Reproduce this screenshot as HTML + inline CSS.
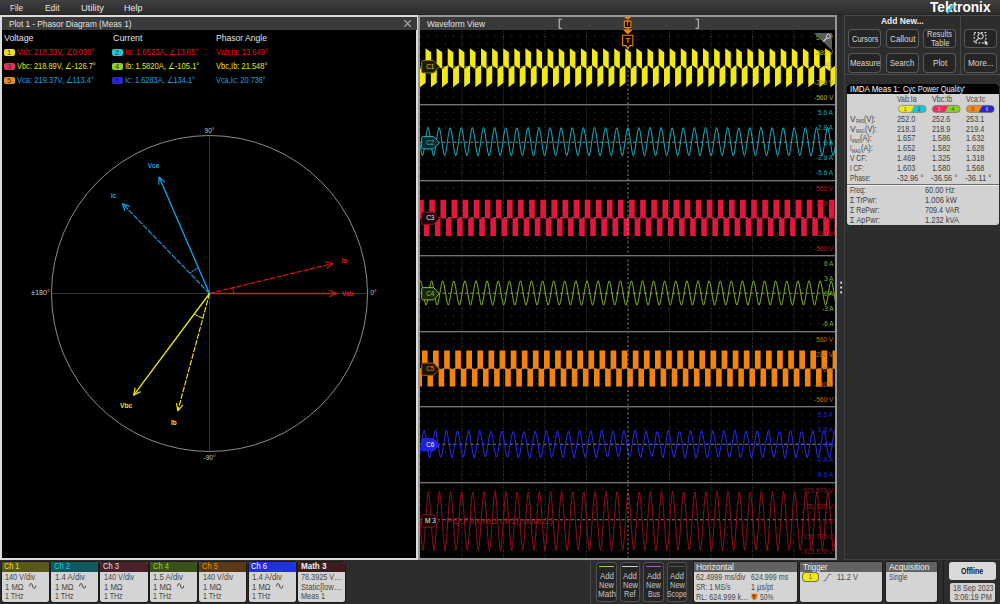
<!DOCTYPE html>
<html lang="en">
<head>
<meta charset="utf-8">
<title>Plot 1 - Phasor Diagram (Meas 1)</title>
<style>
html,body{margin:0;padding:0;}
body{width:1000px;height:604px;overflow:hidden;background:#2c2c2c repeating-conic-gradient(#292929 0% 25%,#303030 0% 50%) 0 0/2px 2px;position:relative;
font-family:"Liberation Sans",sans-serif;}
.abs,.t{position:absolute;}
.t{white-space:nowrap;line-height:1;transform-origin:0 50%;}
svg{position:absolute;overflow:visible;}
.panel{position:absolute;box-sizing:border-box;background:#000;}
.btn{position:absolute;box-sizing:border-box;border:1px solid #585858;border-radius:4px;background:#252525;box-shadow:0 0 1px #4a4a4a;}
.badge{position:absolute;box-sizing:border-box;background:#d6d6d6;border-radius:2px;}
</style>
</head>
<body>
<div class="abs" id="menubar" style="left:0;top:0;width:1000px;height:15px;background:linear-gradient(#404040 0,#373737 35%,#2d2d2d 90%,#202020 100%);"><span class="t" style="left:10.00px;top:3.06px;font-size:9.50px;color:#e6e6e6;transform:scaleX(0.8490);">File</span><span class="t" style="left:44.50px;top:3.06px;font-size:9.50px;color:#e6e6e6;transform:scaleX(0.8855);">Edit</span><span class="t" style="left:80.50px;top:3.06px;font-size:9.50px;color:#e6e6e6;transform:scaleX(0.9899);">Utility</span><span class="t" style="left:124.00px;top:3.06px;font-size:9.50px;color:#e6e6e6;transform:scaleX(0.9464);">Help</span></div>
<div class="panel" id="phasor" style="left:0;top:15px;width:418px;height:545px;border:2px solid #dcdcdc;"><div class="abs" style="left:0;top:0;width:415px;height:13px;background:#3a3a3a;"></div></div>
<span class="t" style="left:8.50px;top:19.06px;font-size:9.50px;color:#e0e0e0;transform:scaleX(0.8657);">Plot 1 - Phasor Diagram (Meas 1)</span><svg style="left:403px;top:19px" width="9" height="9" viewBox="0 0 9 9"><path d="M1.4 1.2 L7.8 7.8 M7.8 1.2 L1.4 7.8" stroke="#b8b8b8" stroke-width="1.05" fill="none"/></svg><span class="t" style="left:4.00px;top:32.76px;font-size:9.50px;color:#e0e0e0;transform:scaleX(0.9305);">Voltage</span><span class="t" style="left:112.60px;top:32.76px;font-size:9.50px;color:#e0e0e0;transform:scaleX(0.9310);">Current</span><span class="t" style="left:216.40px;top:32.76px;font-size:9.50px;color:#e0e0e0;transform:scaleX(0.9024);">Phasor Angle</span><div class="abs" style="left:4.0px;top:48.8px;width:10.5px;height:7.5px;border-radius:2px;background:#e8e020;"></div><span class="t" style="left:7.11px;top:49.15px;font-size:7.50px;color:#333;">1</span><span class="t" style="left:17.00px;top:48.18px;font-size:9.00px;color:#e5121c;transform:scaleX(0.8385);">Vab: 218.33V, ∠0.000°</span><div class="abs" style="left:112.0px;top:48.8px;width:10.5px;height:7.5px;border-radius:2px;background:#25c6d4;"></div><span class="t" style="left:115.11px;top:49.15px;font-size:7.50px;color:#333;">2</span><span class="t" style="left:125.30px;top:48.18px;font-size:9.00px;color:#e5121c;transform:scaleX(0.8641);">Ia: 1.6523A, ∠13.65°</span><span class="t" style="left:216.20px;top:48.18px;font-size:9.00px;color:#e5121c;transform:scaleX(0.8457);">Vab,Ia: 13.649°</span><div class="abs" style="left:4.0px;top:62.8px;width:10.5px;height:7.5px;border-radius:2px;background:#e0305a;"></div><span class="t" style="left:7.11px;top:63.15px;font-size:7.50px;color:#333;">3</span><span class="t" style="left:17.00px;top:62.18px;font-size:9.00px;color:#ece413;transform:scaleX(0.8265);">Vbc: 218.89V, ∠-126.7°</span><div class="abs" style="left:112.0px;top:62.8px;width:10.5px;height:7.5px;border-radius:2px;background:#8fd02a;"></div><span class="t" style="left:115.11px;top:63.15px;font-size:7.50px;color:#333;">4</span><span class="t" style="left:125.30px;top:62.18px;font-size:9.00px;color:#ece413;transform:scaleX(0.8440);">Ib: 1.5820A, ∠-105.1°</span><span class="t" style="left:216.20px;top:62.18px;font-size:9.00px;color:#ece413;transform:scaleX(0.8353);">Vbc,Ib: 21.548°</span><div class="abs" style="left:4.0px;top:76.8px;width:10.5px;height:7.5px;border-radius:2px;background:#f08a1c;"></div><span class="t" style="left:7.11px;top:77.15px;font-size:7.50px;color:#333;">5</span><span class="t" style="left:17.00px;top:76.18px;font-size:9.00px;color:#14a0e4;transform:scaleX(0.8400);">Vca: 219.37V, ∠113.4°</span><div class="abs" style="left:112.0px;top:76.8px;width:10.5px;height:7.5px;border-radius:2px;background:#2828d8;"></div><span class="t" style="left:115.11px;top:77.15px;font-size:7.50px;color:#1a1a90;">6</span><span class="t" style="left:125.30px;top:76.18px;font-size:9.00px;color:#14a0e4;transform:scaleX(0.8269);">Ic: 1.6283A, ∠134.1°</span><span class="t" style="left:216.20px;top:76.18px;font-size:9.00px;color:#14a0e4;transform:scaleX(0.8145);">Vca,Ic: 20.736°</span>
<svg id="phasorplot" style="left:0;top:0" width="419" height="561" viewBox="0 0 419 561"><line x1="51.5" y1="293.5" x2="367.5" y2="293.5" stroke="#353535" stroke-width="1"/><line x1="209.5" y1="135.5" x2="209.5" y2="451.5" stroke="#353535" stroke-width="1"/><circle cx="209.5" cy="293.5" r="158.0" fill="none" stroke="#9a9a9a" stroke-width="0.9"/><line x1="209.50" y1="293.50" x2="336.50" y2="293.50" stroke="#e5121c" stroke-width="1.35"/><line x1="336.50" y1="293.50" x2="329.43" y2="290.20" stroke="#e5121c" stroke-width="1.2"/><line x1="336.50" y1="293.50" x2="329.43" y2="296.80" stroke="#e5121c" stroke-width="1.2"/><line x1="209.50" y1="293.50" x2="332.91" y2="263.53" stroke="#e5121c" stroke-width="1.15" stroke-dasharray="5.6 1.3"/><line x1="332.91" y1="263.53" x2="325.27" y2="261.99" stroke="#e5121c" stroke-width="1.2"/><line x1="332.91" y1="263.53" x2="326.82" y2="268.40" stroke="#e5121c" stroke-width="1.2"/><path d="M233.50 293.50 A24.0 24.0 0 0 0 232.82 287.84" fill="none" stroke="#e5121c" stroke-width="1"/><line x1="209.50" y1="293.50" x2="159.06" y2="176.95" stroke="#14a0e4" stroke-width="1.35"/><line x1="159.06" y1="176.95" x2="158.84" y2="184.74" stroke="#14a0e4" stroke-width="1.2"/><line x1="159.06" y1="176.95" x2="164.90" y2="182.12" stroke="#14a0e4" stroke-width="1.2"/><line x1="209.50" y1="293.50" x2="122.37" y2="203.59" stroke="#14a0e4" stroke-width="1.15" stroke-dasharray="5.6 1.3"/><line x1="122.37" y1="203.59" x2="124.92" y2="210.96" stroke="#14a0e4" stroke-width="1.2"/><line x1="122.37" y1="203.59" x2="129.66" y2="206.37" stroke="#14a0e4" stroke-width="1.2"/><path d="M198.38 267.80 A28.0 28.0 0 0 0 190.01 273.39" fill="none" stroke="#14a0e4" stroke-width="1"/><line x1="209.50" y1="293.50" x2="133.60" y2="395.33" stroke="#ece413" stroke-width="1.35"/><line x1="133.60" y1="395.33" x2="140.47" y2="391.63" stroke="#ece413" stroke-width="1.2"/><line x1="133.60" y1="395.33" x2="135.18" y2="387.69" stroke="#ece413" stroke-width="1.2"/><line x1="209.50" y1="293.50" x2="177.82" y2="410.90" stroke="#ece413" stroke-width="1.15" stroke-dasharray="5.6 1.3"/><line x1="177.82" y1="410.90" x2="182.85" y2="404.94" stroke="#ece413" stroke-width="1.2"/><line x1="177.82" y1="410.90" x2="176.48" y2="403.22" stroke="#ece413" stroke-width="1.2"/><path d="M194.26 313.95 A25.5 25.5 0 0 0 202.86 318.12" fill="none" stroke="#ece413" stroke-width="1"/></svg>
<span class="t" style="left:204.58px;top:128.00px;font-size:6.50px;color:#c8c8c8;">90°</span><span class="t" style="left:203.50px;top:455.00px;font-size:6.50px;color:#c8c8c8;">-90°</span><span class="t" style="left:370.50px;top:290.30px;font-size:6.50px;color:#c8c8c8;">0°</span><span class="t" style="left:30.50px;top:290.30px;font-size:6.50px;color:#c8c8c8;transform:scaleX(1.1166);">±180°</span><span class="t" style="left:342.20px;top:291.28px;font-size:6.40px;color:#e5121c;font-weight:bold;transform:scaleX(1.0198);">Vab</span><span class="t" style="left:341.80px;top:258.08px;font-size:6.40px;color:#e5121c;font-weight:bold;">Ia</span><span class="t" style="left:147.80px;top:163.38px;font-size:6.40px;color:#14a0e4;font-weight:bold;">Vca</span><span class="t" style="left:110.90px;top:193.48px;font-size:6.40px;color:#14a0e4;font-weight:bold;">Ic</span><span class="t" style="left:119.50px;top:403.08px;font-size:6.40px;color:#ece413;font-weight:bold;transform:scaleX(1.0397);">Vbc</span><span class="t" style="left:171.00px;top:420.08px;font-size:6.40px;color:#ece413;font-weight:bold;">Ib</span>
<div class="panel" id="waveview" style="left:418px;top:15px;width:419px;height:545px;border:2px solid #969696;"><div class="abs" style="left:0;top:0;width:415px;height:13px;background:#393939;"></div></div>
<span class="t" style="left:426.50px;top:19.06px;font-size:9.50px;color:#e0e0e0;transform:scaleX(0.8788);">Waveform View</span><svg id="waves" style="left:0;top:0" width="1000" height="604" viewBox="0 0 1000 604"><defs><pattern id="dots" x="420.00" y="66.25" width="8.300" height="7.550" patternUnits="userSpaceOnUse"><rect x="0" y="0" width="1" height="1" fill="#3e3e3e"/></pattern><clipPath id="wclip"><rect x="420.0" y="30.0" width="415.0" height="528.5"/></clipPath></defs><g clip-path="url(#wclip)"><rect x="420.0" y="29.0" width="415.0" height="528.5" fill="url(#dots)"/><line x1="462.00" y1="29.0" x2="462.00" y2="557.5" stroke="#2c2c2c" stroke-width="1" stroke-dasharray="1 1"/><line x1="503.50" y1="29.0" x2="503.50" y2="557.5" stroke="#2c2c2c" stroke-width="1" stroke-dasharray="1 1"/><line x1="545.00" y1="29.0" x2="545.00" y2="557.5" stroke="#2c2c2c" stroke-width="1" stroke-dasharray="1 1"/><line x1="586.50" y1="29.0" x2="586.50" y2="557.5" stroke="#2c2c2c" stroke-width="1" stroke-dasharray="1 1"/><line x1="669.50" y1="29.0" x2="669.50" y2="557.5" stroke="#2c2c2c" stroke-width="1" stroke-dasharray="1 1"/><line x1="711.00" y1="29.0" x2="711.00" y2="557.5" stroke="#2c2c2c" stroke-width="1" stroke-dasharray="1 1"/><line x1="752.50" y1="29.0" x2="752.50" y2="557.5" stroke="#2c2c2c" stroke-width="1" stroke-dasharray="1 1"/><line x1="794.00" y1="29.0" x2="794.00" y2="557.5" stroke="#2c2c2c" stroke-width="1" stroke-dasharray="1 1"/><line x1="420.0" y1="66.75" x2="835.0" y2="66.75" stroke="#858585" stroke-width="1" stroke-dasharray="3 2.6"/><line x1="420.0" y1="142.25" x2="835.0" y2="142.25" stroke="#858585" stroke-width="1" stroke-dasharray="3 2.6"/><line x1="420.0" y1="217.75" x2="835.0" y2="217.75" stroke="#858585" stroke-width="1" stroke-dasharray="3 2.6"/><line x1="420.0" y1="293.25" x2="835.0" y2="293.25" stroke="#858585" stroke-width="1" stroke-dasharray="3 2.6"/><line x1="420.0" y1="368.75" x2="835.0" y2="368.75" stroke="#858585" stroke-width="1" stroke-dasharray="3 2.6"/><line x1="420.0" y1="444.25" x2="835.0" y2="444.25" stroke="#858585" stroke-width="1" stroke-dasharray="3 2.6"/><line x1="420.0" y1="519.75" x2="835.0" y2="519.75" stroke="#858585" stroke-width="1" stroke-dasharray="3 2.6"/><path d="M403.30 48.20 L408.90 52.20 L408.90 69.10 L403.30 64.90 ZM408.70 68.90 L414.55 65.10 L414.55 82.80 L408.70 87.30 ZM414.40 48.20 L420.00 52.20 L420.00 69.10 L414.40 64.90 ZM419.80 68.90 L425.65 65.10 L425.65 82.80 L419.80 87.30 ZM425.50 48.20 L431.10 52.20 L431.10 69.10 L425.50 64.90 ZM430.90 68.90 L436.75 65.10 L436.75 82.80 L430.90 87.30 ZM436.60 48.20 L442.20 52.20 L442.20 69.10 L436.60 64.90 ZM442.00 68.90 L447.85 65.10 L447.85 82.80 L442.00 87.30 ZM447.70 48.20 L453.30 52.20 L453.30 69.10 L447.70 64.90 ZM453.10 68.90 L458.95 65.10 L458.95 82.80 L453.10 87.30 ZM458.80 48.20 L464.40 52.20 L464.40 69.10 L458.80 64.90 ZM464.20 68.90 L470.05 65.10 L470.05 82.80 L464.20 87.30 ZM469.90 48.20 L475.50 52.20 L475.50 69.10 L469.90 64.90 ZM475.30 68.90 L481.15 65.10 L481.15 82.80 L475.30 87.30 ZM481.00 48.20 L486.60 52.20 L486.60 69.10 L481.00 64.90 ZM486.40 68.90 L492.25 65.10 L492.25 82.80 L486.40 87.30 ZM492.10 48.20 L497.70 52.20 L497.70 69.10 L492.10 64.90 ZM497.50 68.90 L503.35 65.10 L503.35 82.80 L497.50 87.30 ZM503.20 48.20 L508.80 52.20 L508.80 69.10 L503.20 64.90 ZM508.60 68.90 L514.45 65.10 L514.45 82.80 L508.60 87.30 ZM514.30 48.20 L519.90 52.20 L519.90 69.10 L514.30 64.90 ZM519.70 68.90 L525.55 65.10 L525.55 82.80 L519.70 87.30 ZM525.40 48.20 L531.00 52.20 L531.00 69.10 L525.40 64.90 ZM530.80 68.90 L536.65 65.10 L536.65 82.80 L530.80 87.30 ZM536.50 48.20 L542.10 52.20 L542.10 69.10 L536.50 64.90 ZM541.90 68.90 L547.75 65.10 L547.75 82.80 L541.90 87.30 ZM547.60 48.20 L553.20 52.20 L553.20 69.10 L547.60 64.90 ZM553.00 68.90 L558.85 65.10 L558.85 82.80 L553.00 87.30 ZM558.70 48.20 L564.30 52.20 L564.30 69.10 L558.70 64.90 ZM564.10 68.90 L569.95 65.10 L569.95 82.80 L564.10 87.30 ZM569.80 48.20 L575.40 52.20 L575.40 69.10 L569.80 64.90 ZM575.20 68.90 L581.05 65.10 L581.05 82.80 L575.20 87.30 ZM580.90 48.20 L586.50 52.20 L586.50 69.10 L580.90 64.90 ZM586.30 68.90 L592.15 65.10 L592.15 82.80 L586.30 87.30 ZM592.00 48.20 L597.60 52.20 L597.60 69.10 L592.00 64.90 ZM597.40 68.90 L603.25 65.10 L603.25 82.80 L597.40 87.30 ZM603.10 48.20 L608.70 52.20 L608.70 69.10 L603.10 64.90 ZM608.50 68.90 L614.35 65.10 L614.35 82.80 L608.50 87.30 ZM614.20 48.20 L619.80 52.20 L619.80 69.10 L614.20 64.90 ZM619.60 68.90 L625.45 65.10 L625.45 82.80 L619.60 87.30 ZM625.30 48.20 L630.90 52.20 L630.90 69.10 L625.30 64.90 ZM630.70 68.90 L636.55 65.10 L636.55 82.80 L630.70 87.30 ZM636.40 48.20 L642.00 52.20 L642.00 69.10 L636.40 64.90 ZM641.80 68.90 L647.65 65.10 L647.65 82.80 L641.80 87.30 ZM647.50 48.20 L653.10 52.20 L653.10 69.10 L647.50 64.90 ZM652.90 68.90 L658.75 65.10 L658.75 82.80 L652.90 87.30 ZM658.60 48.20 L664.20 52.20 L664.20 69.10 L658.60 64.90 ZM664.00 68.90 L669.85 65.10 L669.85 82.80 L664.00 87.30 ZM669.70 48.20 L675.30 52.20 L675.30 69.10 L669.70 64.90 ZM675.10 68.90 L680.95 65.10 L680.95 82.80 L675.10 87.30 ZM680.80 48.20 L686.40 52.20 L686.40 69.10 L680.80 64.90 ZM686.20 68.90 L692.05 65.10 L692.05 82.80 L686.20 87.30 ZM691.90 48.20 L697.50 52.20 L697.50 69.10 L691.90 64.90 ZM697.30 68.90 L703.15 65.10 L703.15 82.80 L697.30 87.30 ZM703.00 48.20 L708.60 52.20 L708.60 69.10 L703.00 64.90 ZM708.40 68.90 L714.25 65.10 L714.25 82.80 L708.40 87.30 ZM714.10 48.20 L719.70 52.20 L719.70 69.10 L714.10 64.90 ZM719.50 68.90 L725.35 65.10 L725.35 82.80 L719.50 87.30 ZM725.20 48.20 L730.80 52.20 L730.80 69.10 L725.20 64.90 ZM730.60 68.90 L736.45 65.10 L736.45 82.80 L730.60 87.30 ZM736.30 48.20 L741.90 52.20 L741.90 69.10 L736.30 64.90 ZM741.70 68.90 L747.55 65.10 L747.55 82.80 L741.70 87.30 ZM747.40 48.20 L753.00 52.20 L753.00 69.10 L747.40 64.90 ZM752.80 68.90 L758.65 65.10 L758.65 82.80 L752.80 87.30 ZM758.50 48.20 L764.10 52.20 L764.10 69.10 L758.50 64.90 ZM763.90 68.90 L769.75 65.10 L769.75 82.80 L763.90 87.30 ZM769.60 48.20 L775.20 52.20 L775.20 69.10 L769.60 64.90 ZM775.00 68.90 L780.85 65.10 L780.85 82.80 L775.00 87.30 ZM780.70 48.20 L786.30 52.20 L786.30 69.10 L780.70 64.90 ZM786.10 68.90 L791.95 65.10 L791.95 82.80 L786.10 87.30 ZM791.80 48.20 L797.40 52.20 L797.40 69.10 L791.80 64.90 ZM797.20 68.90 L803.05 65.10 L803.05 82.80 L797.20 87.30 ZM802.90 48.20 L808.50 52.20 L808.50 69.10 L802.90 64.90 ZM808.30 68.90 L814.15 65.10 L814.15 82.80 L808.30 87.30 ZM814.00 48.20 L819.60 52.20 L819.60 69.10 L814.00 64.90 ZM819.40 68.90 L825.25 65.10 L825.25 82.80 L819.40 87.30 ZM825.10 48.20 L830.70 52.20 L830.70 69.10 L825.10 64.90 ZM830.50 68.90 L836.35 65.10 L836.35 82.80 L830.50 87.30 ZM836.20 48.20 L841.80 52.20 L841.80 69.10 L836.20 64.90 ZM841.60 68.90 L847.45 65.10 L847.45 82.80 L841.60 87.30 Z" fill="#f2ea10"/><polyline points="419.0,136.9 419.5,140.4 420.0,144.1 420.5,147.5 421.0,150.6 421.5,153.2 422.0,155.0 422.5,155.9 423.0,154.7 423.5,152.7 424.0,150.0 424.5,146.9 425.0,143.3 425.5,139.7 426.0,136.2 426.5,133.1 427.0,130.4 427.5,128.5 428.0,127.4 428.5,128.5 429.0,130.4 429.5,133.1 430.0,136.2 430.5,139.7 431.0,143.3 431.5,146.9 432.0,150.0 432.5,152.7 433.0,154.7 433.5,155.9 434.0,155.0 434.5,153.2 435.0,150.6 435.5,147.5 436.0,144.1 436.5,140.4 437.0,136.9 437.5,133.7 438.0,130.9 438.5,128.9 439.0,127.6 439.5,128.2 440.0,130.0 440.5,132.5 441.0,135.5 441.5,139.0 442.0,142.6 442.5,146.2 443.0,149.4 443.5,152.2 444.0,154.4 444.5,155.7 445.0,155.3 445.5,153.6 446.0,151.2 446.5,148.2 447.0,144.8 447.5,141.2 448.0,137.6 448.5,134.3 449.0,131.4 449.5,129.2 450.0,127.8 450.5,128.0 451.0,129.6 451.5,131.9 452.0,134.9 452.5,138.3 453.0,141.9 453.5,145.5 454.0,148.8 454.5,151.7 455.0,154.0 455.5,155.5 456.0,155.5 456.5,154.0 457.0,151.7 457.5,148.8 458.0,145.5 458.5,141.9 459.0,138.3 459.5,134.9 460.0,131.9 460.5,129.6 461.0,128.0 461.5,127.8 462.0,129.2 462.5,131.4 463.0,134.3 463.5,137.6 464.0,141.2 464.5,144.8 465.0,148.2 465.5,151.2 466.0,153.6 466.5,155.3 467.0,155.7 467.5,154.4 468.0,152.2 468.5,149.4 469.0,146.2 469.5,142.6 470.0,139.0 470.5,135.5 471.0,132.5 471.5,130.0 472.0,128.2 472.5,127.6 473.0,128.9 473.5,130.9 474.0,133.7 474.5,136.9 475.0,140.4 475.5,144.1 476.0,147.5 476.5,150.6 477.0,153.2 477.5,155.0 478.0,155.9 478.5,154.7 479.0,152.7 479.5,150.0 480.0,146.9 480.5,143.3 481.0,139.7 481.5,136.2 482.0,133.1 482.5,130.4 483.0,128.5 483.5,127.4 484.0,128.5 484.5,130.4 485.0,133.1 485.5,136.2 486.0,139.7 486.5,143.3 487.0,146.9 487.5,150.0 488.0,152.7 488.5,154.7 489.0,155.9 489.5,155.0 490.0,153.2 490.5,150.6 491.0,147.5 491.5,144.1 492.0,140.4 492.5,136.9 493.0,133.7 493.5,130.9 494.0,128.9 494.5,127.6 495.0,128.2 495.5,130.0 496.0,132.5 496.5,135.5 497.0,139.0 497.5,142.6 498.0,146.2 498.5,149.4 499.0,152.2 499.5,154.4 500.0,155.7 500.5,155.3 501.0,153.6 501.5,151.2 502.0,148.2 502.5,144.8 503.0,141.2 503.5,137.6 504.0,134.3 504.5,131.4 505.0,129.2 505.5,127.8 506.0,128.0 506.5,129.6 507.0,131.9 507.5,134.9 508.0,138.3 508.5,141.9 509.0,145.5 509.5,148.8 510.0,151.7 510.5,154.0 511.0,155.5 511.5,155.5 512.0,154.0 512.5,151.7 513.0,148.8 513.5,145.5 514.0,141.9 514.5,138.3 515.0,134.9 515.5,131.9 516.0,129.6 516.5,128.0 517.0,127.8 517.5,129.2 518.0,131.4 518.5,134.3 519.0,137.6 519.5,141.2 520.0,144.8 520.5,148.2 521.0,151.2 521.5,153.6 522.0,155.3 522.5,155.7 523.0,154.4 523.5,152.2 524.0,149.4 524.5,146.2 525.0,142.6 525.5,139.0 526.0,135.5 526.5,132.5 527.0,130.0 527.5,128.2 528.0,127.6 528.5,128.9 529.0,130.9 529.5,133.7 530.0,136.9 530.5,140.4 531.0,144.1 531.5,147.5 532.0,150.6 532.5,153.2 533.0,155.0 533.5,155.9 534.0,154.7 534.5,152.7 535.0,150.0 535.5,146.9 536.0,143.3 536.5,139.7 537.0,136.2 537.5,133.1 538.0,130.4 538.5,128.5 539.0,127.4 539.5,128.5 540.0,130.4 540.5,133.1 541.0,136.2 541.5,139.7 542.0,143.3 542.5,146.9 543.0,150.0 543.5,152.7 544.0,154.7 544.5,155.9 545.0,155.0 545.5,153.2 546.0,150.6 546.5,147.5 547.0,144.1 547.5,140.4 548.0,136.9 548.5,133.7 549.0,130.9 549.5,128.9 550.0,127.6 550.5,128.2 551.0,130.0 551.5,132.5 552.0,135.5 552.5,139.0 553.0,142.6 553.5,146.2 554.0,149.4 554.5,152.2 555.0,154.4 555.5,155.7 556.0,155.3 556.5,153.6 557.0,151.2 557.5,148.2 558.0,144.8 558.5,141.2 559.0,137.6 559.5,134.3 560.0,131.4 560.5,129.2 561.0,127.8 561.5,128.0 562.0,129.6 562.5,131.9 563.0,134.9 563.5,138.3 564.0,141.9 564.5,145.5 565.0,148.8 565.5,151.7 566.0,154.0 566.5,155.5 567.0,155.5 567.5,154.0 568.0,151.7 568.5,148.8 569.0,145.5 569.5,141.9 570.0,138.3 570.5,134.9 571.0,131.9 571.5,129.6 572.0,128.0 572.5,127.8 573.0,129.2 573.5,131.4 574.0,134.3 574.5,137.6 575.0,141.2 575.5,144.8 576.0,148.2 576.5,151.2 577.0,153.6 577.5,155.3 578.0,155.7 578.5,154.4 579.0,152.2 579.5,149.4 580.0,146.2 580.5,142.6 581.0,139.0 581.5,135.5 582.0,132.5 582.5,130.0 583.0,128.2 583.5,127.6 584.0,128.9 584.5,130.9 585.0,133.7 585.5,136.9 586.0,140.4 586.5,144.1 587.0,147.5 587.5,150.6 588.0,153.2 588.5,155.0 589.0,155.9 589.5,154.7 590.0,152.7 590.5,150.0 591.0,146.9 591.5,143.3 592.0,139.7 592.5,136.2 593.0,133.1 593.5,130.4 594.0,128.5 594.5,127.4 595.0,128.5 595.5,130.4 596.0,133.1 596.5,136.2 597.0,139.7 597.5,143.3 598.0,146.9 598.5,150.0 599.0,152.7 599.5,154.7 600.0,155.9 600.5,155.0 601.0,153.2 601.5,150.6 602.0,147.5 602.5,144.1 603.0,140.4 603.5,136.9 604.0,133.7 604.5,130.9 605.0,128.9 605.5,127.6 606.0,128.2 606.5,130.0 607.0,132.5 607.5,135.5 608.0,139.0 608.5,142.6 609.0,146.2 609.5,149.4 610.0,152.2 610.5,154.4 611.0,155.7 611.5,155.3 612.0,153.6 612.5,151.2 613.0,148.2 613.5,144.8 614.0,141.2 614.5,137.6 615.0,134.3 615.5,131.4 616.0,129.2 616.5,127.8 617.0,128.0 617.5,129.6 618.0,131.9 618.5,134.9 619.0,138.3 619.5,141.9 620.0,145.5 620.5,148.8 621.0,151.7 621.5,154.0 622.0,155.5 622.5,155.5 623.0,154.0 623.5,151.7 624.0,148.8 624.5,145.5 625.0,141.9 625.5,138.3 626.0,134.9 626.5,131.9 627.0,129.6 627.5,128.0 628.0,127.8 628.5,129.2 629.0,131.4 629.5,134.3 630.0,137.6 630.5,141.2 631.0,144.8 631.5,148.2 632.0,151.2 632.5,153.6 633.0,155.3 633.5,155.7 634.0,154.4 634.5,152.2 635.0,149.4 635.5,146.2 636.0,142.6 636.5,139.0 637.0,135.5 637.5,132.5 638.0,130.0 638.5,128.2 639.0,127.6 639.5,128.9 640.0,130.9 640.5,133.7 641.0,136.9 641.5,140.4 642.0,144.1 642.5,147.5 643.0,150.6 643.5,153.2 644.0,155.0 644.5,155.9 645.0,154.7 645.5,152.7 646.0,150.0 646.5,146.9 647.0,143.3 647.5,139.7 648.0,136.2 648.5,133.1 649.0,130.4 649.5,128.5 650.0,127.4 650.5,128.5 651.0,130.4 651.5,133.1 652.0,136.2 652.5,139.7 653.0,143.3 653.5,146.9 654.0,150.0 654.5,152.7 655.0,154.7 655.5,155.9 656.0,155.0 656.5,153.2 657.0,150.6 657.5,147.5 658.0,144.1 658.5,140.4 659.0,136.9 659.5,133.7 660.0,130.9 660.5,128.9 661.0,127.6 661.5,128.2 662.0,130.0 662.5,132.5 663.0,135.5 663.5,139.0 664.0,142.6 664.5,146.2 665.0,149.4 665.5,152.2 666.0,154.4 666.5,155.7 667.0,155.3 667.5,153.6 668.0,151.2 668.5,148.2 669.0,144.8 669.5,141.2 670.0,137.6 670.5,134.3 671.0,131.4 671.5,129.2 672.0,127.8 672.5,128.0 673.0,129.6 673.5,131.9 674.0,134.9 674.5,138.3 675.0,141.9 675.5,145.5 676.0,148.8 676.5,151.7 677.0,154.0 677.5,155.5 678.0,155.5 678.5,154.0 679.0,151.7 679.5,148.8 680.0,145.5 680.5,141.9 681.0,138.3 681.5,134.9 682.0,131.9 682.5,129.6 683.0,128.0 683.5,127.8 684.0,129.2 684.5,131.4 685.0,134.3 685.5,137.6 686.0,141.2 686.5,144.8 687.0,148.2 687.5,151.2 688.0,153.6 688.5,155.3 689.0,155.7 689.5,154.4 690.0,152.2 690.5,149.4 691.0,146.2 691.5,142.6 692.0,139.0 692.5,135.5 693.0,132.5 693.5,130.0 694.0,128.2 694.5,127.6 695.0,128.9 695.5,130.9 696.0,133.7 696.5,136.9 697.0,140.4 697.5,144.1 698.0,147.5 698.5,150.6 699.0,153.2 699.5,155.0 700.0,155.9 700.5,154.7 701.0,152.7 701.5,150.0 702.0,146.9 702.5,143.3 703.0,139.7 703.5,136.2 704.0,133.1 704.5,130.4 705.0,128.5 705.5,127.4 706.0,128.5 706.5,130.4 707.0,133.1 707.5,136.2 708.0,139.7 708.5,143.3 709.0,146.9 709.5,150.0 710.0,152.7 710.5,154.7 711.0,155.9 711.5,155.0 712.0,153.2 712.5,150.6 713.0,147.5 713.5,144.1 714.0,140.4 714.5,136.9 715.0,133.7 715.5,130.9 716.0,128.9 716.5,127.6 717.0,128.2 717.5,130.0 718.0,132.5 718.5,135.5 719.0,139.0 719.5,142.6 720.0,146.2 720.5,149.4 721.0,152.2 721.5,154.4 722.0,155.7 722.5,155.3 723.0,153.6 723.5,151.2 724.0,148.2 724.5,144.8 725.0,141.2 725.5,137.6 726.0,134.3 726.5,131.4 727.0,129.2 727.5,127.8 728.0,128.0 728.5,129.6 729.0,131.9 729.5,134.9 730.0,138.3 730.5,141.9 731.0,145.5 731.5,148.8 732.0,151.7 732.5,154.0 733.0,155.5 733.5,155.5 734.0,154.0 734.5,151.7 735.0,148.8 735.5,145.5 736.0,141.9 736.5,138.3 737.0,134.9 737.5,131.9 738.0,129.6 738.5,128.0 739.0,127.8 739.5,129.2 740.0,131.4 740.5,134.3 741.0,137.6 741.5,141.2 742.0,144.8 742.5,148.2 743.0,151.2 743.5,153.6 744.0,155.3 744.5,155.7 745.0,154.4 745.5,152.2 746.0,149.4 746.5,146.2 747.0,142.6 747.5,139.0 748.0,135.5 748.5,132.5 749.0,130.0 749.5,128.2 750.0,127.6 750.5,128.9 751.0,130.9 751.5,133.7 752.0,136.9 752.5,140.4 753.0,144.1 753.5,147.5 754.0,150.6 754.5,153.2 755.0,155.0 755.5,155.9 756.0,154.7 756.5,152.7 757.0,150.0 757.5,146.9 758.0,143.3 758.5,139.7 759.0,136.2 759.5,133.1 760.0,130.4 760.5,128.5 761.0,127.4 761.5,128.5 762.0,130.4 762.5,133.1 763.0,136.2 763.5,139.7 764.0,143.3 764.5,146.9 765.0,150.0 765.5,152.7 766.0,154.7 766.5,155.9 767.0,155.0 767.5,153.2 768.0,150.6 768.5,147.5 769.0,144.1 769.5,140.4 770.0,136.9 770.5,133.7 771.0,130.9 771.5,128.9 772.0,127.6 772.5,128.2 773.0,130.0 773.5,132.5 774.0,135.5 774.5,139.0 775.0,142.6 775.5,146.2 776.0,149.4 776.5,152.2 777.0,154.4 777.5,155.7 778.0,155.3 778.5,153.6 779.0,151.2 779.5,148.2 780.0,144.8 780.5,141.2 781.0,137.6 781.5,134.3 782.0,131.4 782.5,129.2 783.0,127.8 783.5,128.0 784.0,129.6 784.5,131.9 785.0,134.9 785.5,138.3 786.0,141.9 786.5,145.5 787.0,148.8 787.5,151.7 788.0,154.0 788.5,155.5 789.0,155.5 789.5,154.0 790.0,151.7 790.5,148.8 791.0,145.5 791.5,141.9 792.0,138.3 792.5,134.9 793.0,131.9 793.5,129.6 794.0,128.0 794.5,127.8 795.0,129.2 795.5,131.4 796.0,134.3 796.5,137.6 797.0,141.2 797.5,144.8 798.0,148.2 798.5,151.2 799.0,153.6 799.5,155.3 800.0,155.7 800.5,154.4 801.0,152.2 801.5,149.4 802.0,146.2 802.5,142.6 803.0,139.0 803.5,135.5 804.0,132.5 804.5,130.0 805.0,128.2 805.5,127.6 806.0,128.9 806.5,130.9 807.0,133.7 807.5,136.9 808.0,140.4 808.5,144.1 809.0,147.5 809.5,150.6 810.0,153.2 810.5,155.0 811.0,155.9 811.5,154.7 812.0,152.7 812.5,150.0 813.0,146.9 813.5,143.3 814.0,139.7 814.5,136.2 815.0,133.1 815.5,130.4 816.0,128.5 816.5,127.4 817.0,128.5 817.5,130.4 818.0,133.1 818.5,136.2 819.0,139.7 819.5,143.3 820.0,146.9 820.5,150.0 821.0,152.7 821.5,154.7 822.0,155.9 822.5,155.0 823.0,153.2 823.5,150.6 824.0,147.5 824.5,144.1 825.0,140.4 825.5,136.9 826.0,133.7 826.5,130.9 827.0,128.9 827.5,127.6 828.0,128.2 828.5,130.0 829.0,132.5 829.5,135.5 830.0,139.0 830.5,142.6 831.0,146.2 831.5,149.4 832.0,152.2 832.5,154.4 833.0,155.7 833.5,155.3 834.0,153.6 834.5,151.2 835.0,148.2 835.5,144.8 836.0,141.2" fill="none" stroke="#1cc0d0" stroke-width="0.92" stroke-linejoin="round" opacity="1.00"/><path d="M407.10 199.70 h5.6 v18.6 h-5.6 ZM412.65 218.30 h5.6 v17.6 h-5.6 ZM418.20 199.70 h5.6 v18.6 h-5.6 ZM423.75 218.30 h5.6 v17.6 h-5.6 ZM429.30 199.70 h5.6 v18.6 h-5.6 ZM434.85 218.30 h5.6 v17.6 h-5.6 ZM440.40 199.70 h5.6 v18.6 h-5.6 ZM445.95 218.30 h5.6 v17.6 h-5.6 ZM451.50 199.70 h5.6 v18.6 h-5.6 ZM457.05 218.30 h5.6 v17.6 h-5.6 ZM462.60 199.70 h5.6 v18.6 h-5.6 ZM468.15 218.30 h5.6 v17.6 h-5.6 ZM473.70 199.70 h5.6 v18.6 h-5.6 ZM479.25 218.30 h5.6 v17.6 h-5.6 ZM484.80 199.70 h5.6 v18.6 h-5.6 ZM490.35 218.30 h5.6 v17.6 h-5.6 ZM495.90 199.70 h5.6 v18.6 h-5.6 ZM501.45 218.30 h5.6 v17.6 h-5.6 ZM507.00 199.70 h5.6 v18.6 h-5.6 ZM512.55 218.30 h5.6 v17.6 h-5.6 ZM518.10 199.70 h5.6 v18.6 h-5.6 ZM523.65 218.30 h5.6 v17.6 h-5.6 ZM529.20 199.70 h5.6 v18.6 h-5.6 ZM534.75 218.30 h5.6 v17.6 h-5.6 ZM540.30 199.70 h5.6 v18.6 h-5.6 ZM545.85 218.30 h5.6 v17.6 h-5.6 ZM551.40 199.70 h5.6 v18.6 h-5.6 ZM556.95 218.30 h5.6 v17.6 h-5.6 ZM562.50 199.70 h5.6 v18.6 h-5.6 ZM568.05 218.30 h5.6 v17.6 h-5.6 ZM573.60 199.70 h5.6 v18.6 h-5.6 ZM579.15 218.30 h5.6 v17.6 h-5.6 ZM584.70 199.70 h5.6 v18.6 h-5.6 ZM590.25 218.30 h5.6 v17.6 h-5.6 ZM595.80 199.70 h5.6 v18.6 h-5.6 ZM601.35 218.30 h5.6 v17.6 h-5.6 ZM606.90 199.70 h5.6 v18.6 h-5.6 ZM612.45 218.30 h5.6 v17.6 h-5.6 ZM618.00 199.70 h5.6 v18.6 h-5.6 ZM623.55 218.30 h5.6 v17.6 h-5.6 ZM629.10 199.70 h5.6 v18.6 h-5.6 ZM634.65 218.30 h5.6 v17.6 h-5.6 ZM640.20 199.70 h5.6 v18.6 h-5.6 ZM645.75 218.30 h5.6 v17.6 h-5.6 ZM651.30 199.70 h5.6 v18.6 h-5.6 ZM656.85 218.30 h5.6 v17.6 h-5.6 ZM662.40 199.70 h5.6 v18.6 h-5.6 ZM667.95 218.30 h5.6 v17.6 h-5.6 ZM673.50 199.70 h5.6 v18.6 h-5.6 ZM679.05 218.30 h5.6 v17.6 h-5.6 ZM684.60 199.70 h5.6 v18.6 h-5.6 ZM690.15 218.30 h5.6 v17.6 h-5.6 ZM695.70 199.70 h5.6 v18.6 h-5.6 ZM701.25 218.30 h5.6 v17.6 h-5.6 ZM706.80 199.70 h5.6 v18.6 h-5.6 ZM712.35 218.30 h5.6 v17.6 h-5.6 ZM717.90 199.70 h5.6 v18.6 h-5.6 ZM723.45 218.30 h5.6 v17.6 h-5.6 ZM729.00 199.70 h5.6 v18.6 h-5.6 ZM734.55 218.30 h5.6 v17.6 h-5.6 ZM740.10 199.70 h5.6 v18.6 h-5.6 ZM745.65 218.30 h5.6 v17.6 h-5.6 ZM751.20 199.70 h5.6 v18.6 h-5.6 ZM756.75 218.30 h5.6 v17.6 h-5.6 ZM762.30 199.70 h5.6 v18.6 h-5.6 ZM767.85 218.30 h5.6 v17.6 h-5.6 ZM773.40 199.70 h5.6 v18.6 h-5.6 ZM778.95 218.30 h5.6 v17.6 h-5.6 ZM784.50 199.70 h5.6 v18.6 h-5.6 ZM790.05 218.30 h5.6 v17.6 h-5.6 ZM795.60 199.70 h5.6 v18.6 h-5.6 ZM801.15 218.30 h5.6 v17.6 h-5.6 ZM806.70 199.70 h5.6 v18.6 h-5.6 ZM812.25 218.30 h5.6 v17.6 h-5.6 ZM817.80 199.70 h5.6 v18.6 h-5.6 ZM823.35 218.30 h5.6 v17.6 h-5.6 ZM828.90 199.70 h5.6 v18.6 h-5.6 ZM834.45 218.30 h5.6 v17.6 h-5.6 ZM840.00 199.70 h5.6 v18.6 h-5.6 ZM845.55 218.30 h5.6 v17.6 h-5.6 Z" fill="#e3173c"/><polyline points="419.0,285.6 419.5,283.3 420.0,281.7 420.5,280.7 421.0,281.7 421.5,283.3 422.0,285.6 422.5,288.3 423.0,291.3 423.5,294.4 424.0,297.4 424.5,300.2 425.0,302.5 425.5,304.2 426.0,305.2 426.5,304.5 427.0,302.9 427.5,300.7 428.0,298.0 428.5,295.0 429.0,291.9 429.5,288.9 430.0,286.1 430.5,283.7 431.0,282.0 431.5,280.8 432.0,281.4 432.5,282.9 433.0,285.1 433.5,287.7 434.0,290.7 434.5,293.8 435.0,296.8 435.5,299.7 436.0,302.1 436.5,303.9 437.0,305.1 437.5,304.7 438.0,303.2 438.5,301.2 439.0,298.6 439.5,295.6 440.0,292.5 440.5,289.5 441.0,286.6 441.5,284.2 442.0,282.3 442.5,281.0 443.0,281.2 443.5,282.6 444.0,284.6 444.5,287.1 445.0,290.1 445.5,293.2 446.0,296.2 446.5,299.1 447.0,301.6 447.5,303.6 448.0,304.9 448.5,304.9 449.0,303.6 449.5,301.6 450.0,299.1 450.5,296.2 451.0,293.2 451.5,290.1 452.0,287.1 452.5,284.6 453.0,282.6 453.5,281.2 454.0,281.0 454.5,282.3 455.0,284.2 455.5,286.6 456.0,289.5 456.5,292.5 457.0,295.6 457.5,298.6 458.0,301.2 458.5,303.2 459.0,304.7 459.5,305.1 460.0,303.9 460.5,302.1 461.0,299.7 461.5,296.8 462.0,293.8 462.5,290.7 463.0,287.7 463.5,285.1 464.0,282.9 464.5,281.4 465.0,280.8 465.5,282.0 466.0,283.7 466.5,286.1 467.0,288.9 467.5,291.9 468.0,295.0 468.5,298.0 469.0,300.7 469.5,302.9 470.0,304.5 470.5,305.2 471.0,304.2 471.5,302.5 472.0,300.2 472.5,297.4 473.0,294.4 473.5,291.3 474.0,288.3 474.5,285.6 475.0,283.3 475.5,281.7 476.0,280.7 476.5,281.7 477.0,283.3 477.5,285.6 478.0,288.3 478.5,291.3 479.0,294.4 479.5,297.4 480.0,300.2 480.5,302.5 481.0,304.2 481.5,305.2 482.0,304.5 482.5,302.9 483.0,300.7 483.5,298.0 484.0,295.0 484.5,291.9 485.0,288.9 485.5,286.1 486.0,283.7 486.5,282.0 487.0,280.8 487.5,281.4 488.0,282.9 488.5,285.1 489.0,287.7 489.5,290.7 490.0,293.8 490.5,296.8 491.0,299.7 491.5,302.1 492.0,303.9 492.5,305.1 493.0,304.7 493.5,303.2 494.0,301.2 494.5,298.6 495.0,295.6 495.5,292.5 496.0,289.5 496.5,286.6 497.0,284.2 497.5,282.3 498.0,281.0 498.5,281.2 499.0,282.6 499.5,284.6 500.0,287.1 500.5,290.1 501.0,293.2 501.5,296.2 502.0,299.1 502.5,301.6 503.0,303.6 503.5,304.9 504.0,304.9 504.5,303.6 505.0,301.6 505.5,299.1 506.0,296.2 506.5,293.2 507.0,290.1 507.5,287.1 508.0,284.6 508.5,282.6 509.0,281.2 509.5,281.0 510.0,282.3 510.5,284.2 511.0,286.6 511.5,289.5 512.0,292.5 512.5,295.6 513.0,298.6 513.5,301.2 514.0,303.2 514.5,304.7 515.0,305.1 515.5,303.9 516.0,302.1 516.5,299.7 517.0,296.8 517.5,293.8 518.0,290.7 518.5,287.7 519.0,285.1 519.5,282.9 520.0,281.4 520.5,280.8 521.0,282.0 521.5,283.7 522.0,286.1 522.5,288.9 523.0,291.9 523.5,295.0 524.0,298.0 524.5,300.7 525.0,302.9 525.5,304.5 526.0,305.2 526.5,304.2 527.0,302.5 527.5,300.2 528.0,297.4 528.5,294.4 529.0,291.3 529.5,288.3 530.0,285.6 530.5,283.3 531.0,281.7 531.5,280.7 532.0,281.7 532.5,283.3 533.0,285.6 533.5,288.3 534.0,291.3 534.5,294.4 535.0,297.4 535.5,300.2 536.0,302.5 536.5,304.2 537.0,305.2 537.5,304.5 538.0,302.9 538.5,300.7 539.0,298.0 539.5,295.0 540.0,291.9 540.5,288.9 541.0,286.1 541.5,283.7 542.0,282.0 542.5,280.8 543.0,281.4 543.5,282.9 544.0,285.1 544.5,287.7 545.0,290.7 545.5,293.8 546.0,296.8 546.5,299.7 547.0,302.1 547.5,303.9 548.0,305.1 548.5,304.7 549.0,303.2 549.5,301.2 550.0,298.6 550.5,295.6 551.0,292.5 551.5,289.5 552.0,286.6 552.5,284.2 553.0,282.3 553.5,281.0 554.0,281.2 554.5,282.6 555.0,284.6 555.5,287.1 556.0,290.1 556.5,293.2 557.0,296.2 557.5,299.1 558.0,301.6 558.5,303.6 559.0,304.9 559.5,304.9 560.0,303.6 560.5,301.6 561.0,299.1 561.5,296.2 562.0,293.2 562.5,290.1 563.0,287.1 563.5,284.6 564.0,282.6 564.5,281.2 565.0,281.0 565.5,282.3 566.0,284.2 566.5,286.6 567.0,289.5 567.5,292.5 568.0,295.6 568.5,298.6 569.0,301.2 569.5,303.2 570.0,304.7 570.5,305.1 571.0,303.9 571.5,302.1 572.0,299.7 572.5,296.8 573.0,293.8 573.5,290.7 574.0,287.7 574.5,285.1 575.0,282.9 575.5,281.4 576.0,280.8 576.5,282.0 577.0,283.7 577.5,286.1 578.0,288.9 578.5,291.9 579.0,295.0 579.5,298.0 580.0,300.7 580.5,302.9 581.0,304.5 581.5,305.2 582.0,304.2 582.5,302.5 583.0,300.2 583.5,297.4 584.0,294.4 584.5,291.3 585.0,288.3 585.5,285.6 586.0,283.3 586.5,281.7 587.0,280.7 587.5,281.7 588.0,283.3 588.5,285.6 589.0,288.3 589.5,291.3 590.0,294.4 590.5,297.4 591.0,300.2 591.5,302.5 592.0,304.2 592.5,305.2 593.0,304.5 593.5,302.9 594.0,300.7 594.5,298.0 595.0,295.0 595.5,291.9 596.0,288.9 596.5,286.1 597.0,283.7 597.5,282.0 598.0,280.8 598.5,281.4 599.0,282.9 599.5,285.1 600.0,287.7 600.5,290.7 601.0,293.8 601.5,296.8 602.0,299.7 602.5,302.1 603.0,303.9 603.5,305.1 604.0,304.7 604.5,303.2 605.0,301.2 605.5,298.6 606.0,295.6 606.5,292.5 607.0,289.5 607.5,286.6 608.0,284.2 608.5,282.3 609.0,281.0 609.5,281.2 610.0,282.6 610.5,284.6 611.0,287.1 611.5,290.1 612.0,293.2 612.5,296.2 613.0,299.1 613.5,301.6 614.0,303.6 614.5,304.9 615.0,304.9 615.5,303.6 616.0,301.6 616.5,299.1 617.0,296.2 617.5,293.2 618.0,290.1 618.5,287.1 619.0,284.6 619.5,282.6 620.0,281.2 620.5,281.0 621.0,282.3 621.5,284.2 622.0,286.6 622.5,289.5 623.0,292.5 623.5,295.6 624.0,298.6 624.5,301.2 625.0,303.2 625.5,304.7 626.0,305.1 626.5,303.9 627.0,302.1 627.5,299.7 628.0,296.8 628.5,293.8 629.0,290.7 629.5,287.7 630.0,285.1 630.5,282.9 631.0,281.4 631.5,280.8 632.0,282.0 632.5,283.7 633.0,286.1 633.5,288.9 634.0,291.9 634.5,295.0 635.0,298.0 635.5,300.7 636.0,302.9 636.5,304.5 637.0,305.2 637.5,304.2 638.0,302.5 638.5,300.2 639.0,297.4 639.5,294.4 640.0,291.3 640.5,288.3 641.0,285.6 641.5,283.3 642.0,281.7 642.5,280.7 643.0,281.7 643.5,283.3 644.0,285.6 644.5,288.3 645.0,291.3 645.5,294.4 646.0,297.4 646.5,300.2 647.0,302.5 647.5,304.2 648.0,305.2 648.5,304.5 649.0,302.9 649.5,300.7 650.0,298.0 650.5,295.0 651.0,291.9 651.5,288.9 652.0,286.1 652.5,283.7 653.0,282.0 653.5,280.8 654.0,281.4 654.5,282.9 655.0,285.1 655.5,287.7 656.0,290.7 656.5,293.8 657.0,296.8 657.5,299.7 658.0,302.1 658.5,303.9 659.0,305.1 659.5,304.7 660.0,303.2 660.5,301.2 661.0,298.6 661.5,295.6 662.0,292.5 662.5,289.5 663.0,286.6 663.5,284.2 664.0,282.3 664.5,281.0 665.0,281.2 665.5,282.6 666.0,284.6 666.5,287.1 667.0,290.1 667.5,293.2 668.0,296.2 668.5,299.1 669.0,301.6 669.5,303.6 670.0,304.9 670.5,304.9 671.0,303.6 671.5,301.6 672.0,299.1 672.5,296.2 673.0,293.2 673.5,290.1 674.0,287.1 674.5,284.6 675.0,282.6 675.5,281.2 676.0,281.0 676.5,282.3 677.0,284.2 677.5,286.6 678.0,289.5 678.5,292.5 679.0,295.6 679.5,298.6 680.0,301.2 680.5,303.2 681.0,304.7 681.5,305.1 682.0,303.9 682.5,302.1 683.0,299.7 683.5,296.8 684.0,293.8 684.5,290.7 685.0,287.7 685.5,285.1 686.0,282.9 686.5,281.4 687.0,280.8 687.5,282.0 688.0,283.7 688.5,286.1 689.0,288.9 689.5,291.9 690.0,295.0 690.5,298.0 691.0,300.7 691.5,302.9 692.0,304.5 692.5,305.2 693.0,304.2 693.5,302.5 694.0,300.2 694.5,297.4 695.0,294.4 695.5,291.3 696.0,288.3 696.5,285.6 697.0,283.3 697.5,281.7 698.0,280.7 698.5,281.7 699.0,283.3 699.5,285.6 700.0,288.3 700.5,291.3 701.0,294.4 701.5,297.4 702.0,300.2 702.5,302.5 703.0,304.2 703.5,305.2 704.0,304.5 704.5,302.9 705.0,300.7 705.5,298.0 706.0,295.0 706.5,291.9 707.0,288.9 707.5,286.1 708.0,283.7 708.5,282.0 709.0,280.8 709.5,281.4 710.0,282.9 710.5,285.1 711.0,287.7 711.5,290.7 712.0,293.8 712.5,296.8 713.0,299.7 713.5,302.1 714.0,303.9 714.5,305.1 715.0,304.7 715.5,303.2 716.0,301.2 716.5,298.6 717.0,295.6 717.5,292.5 718.0,289.5 718.5,286.6 719.0,284.2 719.5,282.3 720.0,281.0 720.5,281.2 721.0,282.6 721.5,284.6 722.0,287.1 722.5,290.1 723.0,293.2 723.5,296.2 724.0,299.1 724.5,301.6 725.0,303.6 725.5,304.9 726.0,304.9 726.5,303.6 727.0,301.6 727.5,299.1 728.0,296.2 728.5,293.2 729.0,290.1 729.5,287.1 730.0,284.6 730.5,282.6 731.0,281.2 731.5,281.0 732.0,282.3 732.5,284.2 733.0,286.6 733.5,289.5 734.0,292.5 734.5,295.6 735.0,298.6 735.5,301.2 736.0,303.2 736.5,304.7 737.0,305.1 737.5,303.9 738.0,302.1 738.5,299.7 739.0,296.8 739.5,293.8 740.0,290.7 740.5,287.7 741.0,285.1 741.5,282.9 742.0,281.4 742.5,280.8 743.0,282.0 743.5,283.7 744.0,286.1 744.5,288.9 745.0,291.9 745.5,295.0 746.0,298.0 746.5,300.7 747.0,302.9 747.5,304.5 748.0,305.2 748.5,304.2 749.0,302.5 749.5,300.2 750.0,297.4 750.5,294.4 751.0,291.3 751.5,288.3 752.0,285.6 752.5,283.3 753.0,281.7 753.5,280.7 754.0,281.7 754.5,283.3 755.0,285.6 755.5,288.3 756.0,291.3 756.5,294.4 757.0,297.4 757.5,300.2 758.0,302.5 758.5,304.2 759.0,305.2 759.5,304.5 760.0,302.9 760.5,300.7 761.0,298.0 761.5,295.0 762.0,291.9 762.5,288.9 763.0,286.1 763.5,283.7 764.0,282.0 764.5,280.8 765.0,281.4 765.5,282.9 766.0,285.1 766.5,287.7 767.0,290.7 767.5,293.8 768.0,296.8 768.5,299.7 769.0,302.1 769.5,303.9 770.0,305.1 770.5,304.7 771.0,303.2 771.5,301.2 772.0,298.6 772.5,295.6 773.0,292.5 773.5,289.5 774.0,286.6 774.5,284.2 775.0,282.3 775.5,281.0 776.0,281.2 776.5,282.6 777.0,284.6 777.5,287.1 778.0,290.1 778.5,293.2 779.0,296.2 779.5,299.1 780.0,301.6 780.5,303.6 781.0,304.9 781.5,304.9 782.0,303.6 782.5,301.6 783.0,299.1 783.5,296.2 784.0,293.2 784.5,290.1 785.0,287.1 785.5,284.6 786.0,282.6 786.5,281.2 787.0,281.0 787.5,282.3 788.0,284.2 788.5,286.6 789.0,289.5 789.5,292.5 790.0,295.6 790.5,298.6 791.0,301.2 791.5,303.2 792.0,304.7 792.5,305.1 793.0,303.9 793.5,302.1 794.0,299.7 794.5,296.8 795.0,293.8 795.5,290.7 796.0,287.7 796.5,285.1 797.0,282.9 797.5,281.4 798.0,280.8 798.5,282.0 799.0,283.7 799.5,286.1 800.0,288.9 800.5,291.9 801.0,295.0 801.5,298.0 802.0,300.7 802.5,302.9 803.0,304.5 803.5,305.2 804.0,304.2 804.5,302.5 805.0,300.2 805.5,297.4 806.0,294.4 806.5,291.3 807.0,288.3 807.5,285.6 808.0,283.3 808.5,281.7 809.0,280.7 809.5,281.7 810.0,283.3 810.5,285.6 811.0,288.3 811.5,291.3 812.0,294.4 812.5,297.4 813.0,300.2 813.5,302.5 814.0,304.2 814.5,305.2 815.0,304.5 815.5,302.9 816.0,300.7 816.5,298.0 817.0,295.0 817.5,291.9 818.0,288.9 818.5,286.1 819.0,283.7 819.5,282.0 820.0,280.8 820.5,281.4 821.0,282.9 821.5,285.1 822.0,287.7 822.5,290.7 823.0,293.8 823.5,296.8 824.0,299.7 824.5,302.1 825.0,303.9 825.5,305.1 826.0,304.7 826.5,303.2 827.0,301.2 827.5,298.6 828.0,295.6 828.5,292.5 829.0,289.5 829.5,286.6 830.0,284.2 830.5,282.3 831.0,281.0 831.5,281.2 832.0,282.6 832.5,284.6 833.0,287.1 833.5,290.1 834.0,293.2 834.5,296.2 835.0,299.1 835.5,301.6 836.0,303.6" fill="none" stroke="#8cc51f" stroke-width="0.92" stroke-linejoin="round" opacity="1.00"/><path d="M399.70 350.60 h5.7 v18.2 h-5.7 ZM405.30 368.80 h5.6 v17.6 h-5.6 ZM410.80 350.60 h5.7 v18.2 h-5.7 ZM416.40 368.80 h5.6 v17.6 h-5.6 ZM421.90 350.60 h5.7 v18.2 h-5.7 ZM427.50 368.80 h5.6 v17.6 h-5.6 ZM433.00 350.60 h5.7 v18.2 h-5.7 ZM438.60 368.80 h5.6 v17.6 h-5.6 ZM444.10 350.60 h5.7 v18.2 h-5.7 ZM449.70 368.80 h5.6 v17.6 h-5.6 ZM455.20 350.60 h5.7 v18.2 h-5.7 ZM460.80 368.80 h5.6 v17.6 h-5.6 ZM466.30 350.60 h5.7 v18.2 h-5.7 ZM471.90 368.80 h5.6 v17.6 h-5.6 ZM477.40 350.60 h5.7 v18.2 h-5.7 ZM483.00 368.80 h5.6 v17.6 h-5.6 ZM488.50 350.60 h5.7 v18.2 h-5.7 ZM494.10 368.80 h5.6 v17.6 h-5.6 ZM499.60 350.60 h5.7 v18.2 h-5.7 ZM505.20 368.80 h5.6 v17.6 h-5.6 ZM510.70 350.60 h5.7 v18.2 h-5.7 ZM516.30 368.80 h5.6 v17.6 h-5.6 ZM521.80 350.60 h5.7 v18.2 h-5.7 ZM527.40 368.80 h5.6 v17.6 h-5.6 ZM532.90 350.60 h5.7 v18.2 h-5.7 ZM538.50 368.80 h5.6 v17.6 h-5.6 ZM544.00 350.60 h5.7 v18.2 h-5.7 ZM549.60 368.80 h5.6 v17.6 h-5.6 ZM555.10 350.60 h5.7 v18.2 h-5.7 ZM560.70 368.80 h5.6 v17.6 h-5.6 ZM566.20 350.60 h5.7 v18.2 h-5.7 ZM571.80 368.80 h5.6 v17.6 h-5.6 ZM577.30 350.60 h5.7 v18.2 h-5.7 ZM582.90 368.80 h5.6 v17.6 h-5.6 ZM588.40 350.60 h5.7 v18.2 h-5.7 ZM594.00 368.80 h5.6 v17.6 h-5.6 ZM599.50 350.60 h5.7 v18.2 h-5.7 ZM605.10 368.80 h5.6 v17.6 h-5.6 ZM610.60 350.60 h5.7 v18.2 h-5.7 ZM616.20 368.80 h5.6 v17.6 h-5.6 ZM621.70 350.60 h5.7 v18.2 h-5.7 ZM627.30 368.80 h5.6 v17.6 h-5.6 ZM632.80 350.60 h5.7 v18.2 h-5.7 ZM638.40 368.80 h5.6 v17.6 h-5.6 ZM643.90 350.60 h5.7 v18.2 h-5.7 ZM649.50 368.80 h5.6 v17.6 h-5.6 ZM655.00 350.60 h5.7 v18.2 h-5.7 ZM660.60 368.80 h5.6 v17.6 h-5.6 ZM666.10 350.60 h5.7 v18.2 h-5.7 ZM671.70 368.80 h5.6 v17.6 h-5.6 ZM677.20 350.60 h5.7 v18.2 h-5.7 ZM682.80 368.80 h5.6 v17.6 h-5.6 ZM688.30 350.60 h5.7 v18.2 h-5.7 ZM693.90 368.80 h5.6 v17.6 h-5.6 ZM699.40 350.60 h5.7 v18.2 h-5.7 ZM705.00 368.80 h5.6 v17.6 h-5.6 ZM710.50 350.60 h5.7 v18.2 h-5.7 ZM716.10 368.80 h5.6 v17.6 h-5.6 ZM721.60 350.60 h5.7 v18.2 h-5.7 ZM727.20 368.80 h5.6 v17.6 h-5.6 ZM732.70 350.60 h5.7 v18.2 h-5.7 ZM738.30 368.80 h5.6 v17.6 h-5.6 ZM743.80 350.60 h5.7 v18.2 h-5.7 ZM749.40 368.80 h5.6 v17.6 h-5.6 ZM754.90 350.60 h5.7 v18.2 h-5.7 ZM760.50 368.80 h5.6 v17.6 h-5.6 ZM766.00 350.60 h5.7 v18.2 h-5.7 ZM771.60 368.80 h5.6 v17.6 h-5.6 ZM777.10 350.60 h5.7 v18.2 h-5.7 ZM782.70 368.80 h5.6 v17.6 h-5.6 ZM788.20 350.60 h5.7 v18.2 h-5.7 ZM793.80 368.80 h5.6 v17.6 h-5.6 ZM799.30 350.60 h5.7 v18.2 h-5.7 ZM804.90 368.80 h5.6 v17.6 h-5.6 ZM810.40 350.60 h5.7 v18.2 h-5.7 ZM816.00 368.80 h5.6 v17.6 h-5.6 ZM821.50 350.60 h5.7 v18.2 h-5.7 ZM827.10 368.80 h5.6 v17.6 h-5.6 ZM832.60 350.60 h5.7 v18.2 h-5.7 ZM838.20 368.80 h5.6 v17.6 h-5.6 ZM843.70 350.60 h5.7 v18.2 h-5.7 ZM849.30 368.80 h5.6 v17.6 h-5.6 Z" fill="#f3830f"/><polyline points="419.0,456.4 419.5,454.6 420.0,453.2 420.5,449.4 421.0,447.1 421.5,443.5 422.0,439.6 422.5,437.3 423.0,433.9 423.5,432.5 424.0,430.6 424.5,430.8 425.0,432.9 425.5,435.8 426.0,437.2 426.5,440.5 427.0,444.6 427.5,448.5 428.0,450.9 428.5,453.3 429.0,456.4 429.5,456.2 430.0,457.6 430.5,455.2 431.0,452.8 431.5,450.1 432.0,447.3 432.5,444.9 433.0,440.5 433.5,438.1 434.0,435.4 434.5,432.8 435.0,431.6 435.5,430.5 436.0,431.9 436.5,434.2 437.0,437.7 437.5,440.3 438.0,443.4 438.5,447.2 439.0,450.1 439.5,452.6 440.0,455.7 440.5,457.1 441.0,456.7 441.5,456.0 442.0,454.0 442.5,452.0 443.0,448.7 443.5,444.7 444.0,442.6 444.5,437.8 445.0,435.5 445.5,433.9 446.0,431.1 446.5,431.1 447.0,431.5 447.5,434.6 448.0,437.2 448.5,439.9 449.0,443.7 449.5,446.0 450.0,449.9 450.5,452.6 451.0,454.9 451.5,456.4 452.0,457.9 452.5,457.0 453.0,454.3 453.5,452.2 454.0,448.2 454.5,446.1 455.0,442.6 455.5,440.0 456.0,436.8 456.5,433.4 457.0,431.8 457.5,431.3 458.0,431.2 458.5,433.7 459.0,435.6 459.5,438.4 460.0,441.6 460.5,446.2 461.0,448.3 461.5,451.5 462.0,454.2 462.5,456.9 463.0,456.6 463.5,456.4 464.0,454.9 464.5,453.1 465.0,450.2 465.5,447.0 466.0,442.6 466.5,439.6 467.0,436.5 467.5,434.9 468.0,433.2 468.5,430.5 469.0,431.2 469.5,432.9 470.0,435.2 470.5,438.5 471.0,441.9 471.5,444.6 472.0,447.4 472.5,451.2 473.0,453.7 473.5,456.0 474.0,458.0 474.5,457.1 475.0,455.2 475.5,453.2 476.0,450.5 476.5,446.2 477.0,444.4 477.5,440.9 478.0,438.0 478.5,435.2 479.0,432.5 479.5,431.1 480.0,430.8 480.5,433.3 481.0,434.4 481.5,437.1 482.0,440.5 482.5,443.8 483.0,447.4 483.5,450.0 484.0,452.6 484.5,454.9 485.0,456.3 485.5,456.7 486.0,454.7 486.5,454.1 487.0,451.0 487.5,447.0 488.0,443.9 488.5,440.8 489.0,437.7 489.5,434.5 490.0,433.7 490.5,432.4 491.0,431.3 491.5,432.6 492.0,434.0 492.5,436.6 493.0,440.1 493.5,443.3 494.0,447.6 494.5,449.6 495.0,452.1 495.5,456.0 496.0,456.8 496.5,456.5 497.0,456.0 497.5,453.1 498.0,451.4 498.5,449.2 499.0,445.7 499.5,442.1 500.0,438.1 500.5,435.5 501.0,432.8 501.5,432.3 502.0,431.2 502.5,432.8 503.0,433.9 503.5,436.3 504.0,440.3 504.5,443.9 505.0,447.0 505.5,450.1 506.0,453.0 506.5,455.2 507.0,456.0 507.5,457.4 508.0,456.0 508.5,453.5 509.0,451.1 509.5,448.6 510.0,445.3 510.5,442.7 511.0,440.0 511.5,436.1 512.0,434.6 512.5,432.9 513.0,431.8 513.5,431.8 514.0,433.3 514.5,435.7 515.0,438.6 515.5,441.8 516.0,445.9 516.5,449.7 517.0,452.5 517.5,454.3 518.0,456.5 518.5,457.9 519.0,455.7 519.5,455.1 520.0,453.2 520.5,450.1 521.0,446.8 521.5,443.0 522.0,439.2 522.5,437.3 523.0,433.9 523.5,432.9 524.0,432.0 524.5,431.6 525.0,433.2 525.5,436.5 526.0,438.9 526.5,441.1 527.0,444.4 527.5,447.7 528.0,452.1 528.5,454.5 529.0,455.3 529.5,457.8 530.0,457.6 530.5,455.5 531.0,452.7 531.5,450.3 532.0,446.4 532.5,442.8 533.0,441.2 533.5,437.6 534.0,434.8 534.5,433.4 535.0,431.2 535.5,432.2 536.0,433.6 536.5,434.7 537.0,437.5 537.5,440.7 538.0,443.9 538.5,447.8 539.0,450.3 539.5,453.3 540.0,454.9 540.5,457.7 541.0,456.7 541.5,455.5 542.0,453.6 542.5,451.5 543.0,447.5 543.5,445.1 544.0,441.0 544.5,438.0 545.0,435.2 545.5,432.2 546.0,431.4 546.5,430.8 547.0,431.8 547.5,435.2 548.0,436.7 548.5,440.3 549.0,444.1 549.5,447.1 550.0,449.9 550.5,453.0 551.0,455.3 551.5,457.3 552.0,456.5 552.5,456.0 553.0,453.5 553.5,450.9 554.0,448.8 554.5,445.1 555.0,441.8 555.5,439.0 556.0,436.4 556.5,433.3 557.0,432.0 557.5,431.2 558.0,432.4 558.5,434.6 559.0,436.7 559.5,439.8 560.0,443.0 560.5,447.2 561.0,449.9 561.5,453.1 562.0,455.6 562.5,456.1 563.0,457.4 563.5,457.0 564.0,455.0 564.5,451.3 565.0,448.3 565.5,445.6 566.0,441.6 566.5,438.7 567.0,435.5 567.5,434.1 568.0,432.6 568.5,431.7 569.0,431.4 569.5,434.2 570.0,436.5 570.5,438.5 571.0,443.0 571.5,446.5 572.0,448.5 572.5,452.7 573.0,454.2 573.5,456.2 574.0,458.2 574.5,457.1 575.0,454.2 575.5,452.3 576.0,449.6 576.5,446.1 577.0,442.5 577.5,439.4 578.0,437.2 578.5,433.4 579.0,432.4 579.5,431.0 580.0,430.9 580.5,433.1 581.0,435.9 581.5,438.5 582.0,440.9 582.5,445.9 583.0,448.8 583.5,452.2 584.0,453.2 584.5,455.5 585.0,456.3 585.5,457.3 586.0,454.8 586.5,452.3 587.0,450.0 587.5,447.8 588.0,444.3 588.5,440.0 589.0,436.7 589.5,435.5 590.0,432.8 590.5,431.7 591.0,430.8 591.5,432.2 592.0,435.5 592.5,437.8 593.0,440.3 593.5,445.2 594.0,447.9 594.5,451.3 595.0,452.7 595.5,456.2 596.0,456.2 596.5,457.6 597.0,455.5 597.5,453.2 598.0,450.9 598.5,448.5 599.0,443.9 599.5,440.4 600.0,438.0 600.5,434.7 601.0,432.3 601.5,430.9 602.0,430.5 602.5,432.1 603.0,434.4 603.5,437.0 604.0,440.9 604.5,443.3 605.0,447.0 605.5,449.6 606.0,452.7 606.5,454.3 607.0,456.3 607.5,456.3 608.0,456.3 608.5,454.0 609.0,450.8 609.5,448.3 610.0,445.8 610.5,441.0 611.0,439.1 611.5,435.6 612.0,433.4 612.5,432.4 613.0,431.0 613.5,432.4 614.0,434.6 614.5,437.6 615.0,439.5 615.5,443.6 616.0,446.7 616.5,449.8 617.0,452.3 617.5,454.5 618.0,455.7 618.5,456.7 619.0,455.4 619.5,454.8 620.0,451.5 620.5,448.4 621.0,445.0 621.5,443.0 622.0,439.8 622.5,436.5 623.0,433.4 623.5,431.6 624.0,430.6 624.5,432.0 625.0,433.2 625.5,436.1 626.0,438.7 626.5,443.2 627.0,446.6 627.5,449.0 628.0,451.4 628.5,455.2 629.0,455.9 629.5,457.1 630.0,455.6 630.5,454.6 631.0,452.4 631.5,449.6 632.0,445.8 632.5,443.0 633.0,438.9 633.5,436.3 634.0,433.5 634.5,432.2 635.0,430.3 635.5,430.9 636.0,433.1 636.5,435.2 637.0,438.7 637.5,441.8 638.0,445.5 638.5,448.6 639.0,451.7 639.5,454.6 640.0,455.7 640.5,456.9 641.0,457.6 641.5,454.6 642.0,453.4 642.5,450.4 643.0,446.2 643.5,444.3 644.0,441.1 644.5,437.6 645.0,435.1 645.5,433.2 646.0,430.7 646.5,431.6 647.0,433.0 647.5,435.8 648.0,438.5 648.5,441.6 649.0,444.5 649.5,448.4 650.0,451.1 650.5,453.8 651.0,455.1 651.5,456.1 652.0,456.3 652.5,455.3 653.0,452.7 653.5,451.4 654.0,447.8 654.5,444.6 655.0,441.3 655.5,438.2 656.0,435.2 656.5,432.1 657.0,432.1 657.5,431.8 658.0,432.7 658.5,434.8 659.0,437.6 659.5,439.6 660.0,444.1 660.5,446.6 661.0,449.4 661.5,452.5 662.0,455.6 662.5,456.2 663.0,457.6 663.5,456.8 664.0,453.9 664.5,451.1 665.0,448.3 665.5,445.4 666.0,442.2 666.5,438.7 667.0,436.0 667.5,432.6 668.0,431.1 668.5,430.7 669.0,432.8 669.5,433.9 670.0,436.9 670.5,438.9 671.0,442.2 671.5,446.0 672.0,449.9 672.5,452.8 673.0,455.1 673.5,456.1 674.0,457.4 674.5,456.1 675.0,454.3 675.5,451.2 676.0,449.7 676.5,445.2 677.0,443.2 677.5,439.9 678.0,435.4 678.5,433.7 679.0,432.6 679.5,431.8 680.0,432.0 680.5,433.4 681.0,435.7 681.5,439.9 682.0,441.8 682.5,445.9 683.0,448.3 683.5,451.9 684.0,455.2 684.5,455.5 685.0,457.9 685.5,456.5 686.0,455.5 686.5,452.8 687.0,449.1 687.5,447.1 688.0,443.0 688.5,438.9 689.0,435.9 689.5,434.2 690.0,432.3 690.5,430.8 691.0,431.1 691.5,433.1 692.0,435.4 692.5,439.1 693.0,440.8 693.5,445.5 694.0,448.9 694.5,450.7 695.0,454.7 695.5,456.3 696.0,457.9 696.5,456.4 697.0,455.0 697.5,452.8 698.0,451.1 698.5,447.2 699.0,443.4 699.5,440.3 700.0,436.9 700.5,433.9 701.0,432.0 701.5,431.9 702.0,431.2 702.5,433.8 703.0,434.7 703.5,437.5 704.0,441.1 704.5,443.8 705.0,447.5 705.5,451.6 706.0,454.1 706.5,456.1 707.0,457.2 707.5,457.7 708.0,456.4 708.5,453.5 709.0,451.2 709.5,446.9 710.0,444.8 710.5,441.0 711.0,438.4 711.5,435.5 712.0,432.6 712.5,430.7 713.0,432.1 713.5,432.0 714.0,434.7 714.5,437.1 715.0,440.0 715.5,444.1 716.0,447.9 716.5,449.8 717.0,453.2 717.5,454.8 718.0,456.9 718.5,457.0 719.0,455.3 719.5,453.3 720.0,450.8 720.5,449.1 721.0,445.0 721.5,441.2 722.0,439.2 722.5,436.6 723.0,433.3 723.5,431.1 724.0,430.6 724.5,431.6 725.0,434.0 725.5,436.0 726.0,439.3 726.5,442.6 727.0,446.5 727.5,450.3 728.0,452.9 728.5,454.6 729.0,456.3 729.5,457.4 730.0,456.0 730.5,454.1 731.0,451.1 731.5,448.6 732.0,446.5 732.5,441.7 733.0,439.1 733.5,436.5 734.0,434.5 734.5,431.5 735.0,430.6 735.5,431.6 736.0,433.6 736.5,436.1 737.0,439.9 737.5,443.0 738.0,446.4 738.5,448.1 739.0,451.1 739.5,454.7 740.0,456.9 740.5,457.3 741.0,456.7 741.5,453.9 742.0,452.2 742.5,450.3 743.0,447.0 743.5,443.7 744.0,440.6 744.5,436.3 745.0,433.5 745.5,431.7 746.0,431.2 746.5,432.1 747.0,434.2 747.5,436.1 748.0,438.8 748.5,442.2 749.0,445.0 749.5,448.4 750.0,450.5 750.5,454.4 751.0,455.4 751.5,457.9 752.0,457.0 752.5,454.8 753.0,452.3 753.5,449.7 754.0,447.3 754.5,444.1 755.0,439.7 755.5,436.6 756.0,434.8 756.5,432.8 757.0,431.1 757.5,431.0 758.0,433.2 758.5,434.3 759.0,437.6 759.5,441.0 760.0,445.2 760.5,447.9 761.0,451.5 761.5,453.4 762.0,455.1 762.5,456.5 763.0,457.8 763.5,455.9 764.0,453.1 764.5,449.9 765.0,447.7 765.5,444.7 766.0,440.9 766.5,437.5 767.0,435.5 767.5,433.8 768.0,431.0 768.5,430.5 769.0,432.4 769.5,434.6 770.0,437.7 770.5,439.9 771.0,444.2 771.5,447.5 772.0,450.2 772.5,452.4 773.0,456.0 773.5,456.4 774.0,457.7 774.5,455.4 775.0,453.4 775.5,451.8 776.0,448.0 776.5,445.9 777.0,441.7 777.5,438.0 778.0,435.2 778.5,433.3 779.0,432.1 779.5,432.0 780.0,431.7 780.5,434.1 781.0,436.3 781.5,440.6 782.0,442.4 782.5,445.6 783.0,448.8 783.5,452.3 784.0,455.5 784.5,457.2 785.0,457.7 785.5,457.1 786.0,455.1 786.5,451.6 787.0,448.4 787.5,446.5 788.0,442.8 788.5,438.3 789.0,436.5 789.5,433.6 790.0,431.8 790.5,430.7 791.0,431.4 791.5,432.9 792.0,435.8 792.5,438.9 793.0,443.2 793.5,445.0 794.0,449.8 794.5,451.4 795.0,454.1 795.5,456.8 796.0,457.9 796.5,456.4 797.0,454.0 797.5,452.4 798.0,449.3 798.5,447.1 799.0,442.5 799.5,439.5 800.0,437.5 800.5,433.4 801.0,432.2 801.5,431.7 802.0,432.3 802.5,432.6 803.0,434.9 803.5,437.7 804.0,442.5 804.5,444.6 805.0,448.8 805.5,452.1 806.0,453.6 806.5,455.5 807.0,458.0 807.5,457.0 808.0,454.8 808.5,453.3 809.0,449.9 809.5,446.6 810.0,442.8 810.5,440.9 811.0,438.1 811.5,434.9 812.0,433.5 812.5,430.5 813.0,431.1 813.5,433.0 814.0,436.0 814.5,438.7 815.0,440.8 815.5,443.9 816.0,447.6 816.5,450.8 817.0,454.2 817.5,455.0 818.0,457.5 818.5,457.4 819.0,456.1 819.5,453.9 820.0,451.0 820.5,447.4 821.0,444.0 821.5,440.8 822.0,438.4 822.5,434.4 823.0,432.5 823.5,432.0 824.0,430.9 824.5,431.9 825.0,433.9 825.5,437.4 826.0,440.1 826.5,444.6 827.0,447.7 827.5,451.1 828.0,452.5 828.5,454.4 829.0,456.0 829.5,457.2 830.0,456.3 830.5,453.8 831.0,450.9 831.5,448.2 832.0,445.3 832.5,442.0 833.0,439.0 833.5,436.3 834.0,433.7 834.5,431.1 835.0,431.8 835.5,432.0 836.0,434.4" fill="none" stroke="#2426e4" stroke-width="1.05" stroke-linejoin="round" opacity="1.00"/><polyline points="419.0,505.5 419.5,512.4 420.0,519.9 420.5,527.4 421.0,534.5 421.5,540.8 422.0,545.8 422.5,549.3 423.0,550.3 423.5,547.4 424.0,543.0 424.5,537.1 425.0,530.3 425.5,522.9 426.0,515.4 426.5,508.2 427.0,501.8 427.5,496.6 428.0,493.0 428.5,491.5 429.0,494.2 429.5,498.5 430.0,504.2 430.5,511.0 431.0,518.4 431.5,525.9 432.0,533.1 432.5,539.6 433.0,544.9 433.5,548.8 434.0,550.6 434.5,548.1 435.0,544.0 435.5,538.4 436.0,531.7 436.5,524.4 437.0,516.8 437.5,509.6 438.0,503.0 438.5,497.6 439.0,493.6 439.5,491.2 440.0,493.6 440.5,497.6 441.0,503.0 441.5,509.6 442.0,516.8 442.5,524.4 443.0,531.7 443.5,538.4 444.0,544.0 444.5,548.1 445.0,550.6 445.5,548.8 446.0,544.9 446.5,539.6 447.0,533.1 447.5,525.9 448.0,518.4 448.5,511.0 449.0,504.2 449.5,498.5 450.0,494.2 450.5,491.5 451.0,493.0 451.5,496.6 452.0,501.8 452.5,508.2 453.0,515.4 453.5,522.9 454.0,530.3 454.5,537.1 455.0,543.0 455.5,547.4 456.0,550.3 456.5,549.3 457.0,545.8 457.5,540.8 458.0,534.5 458.5,527.4 459.0,519.9 459.5,512.4 460.0,505.5 460.5,499.6 461.0,495.0 461.5,491.9 462.0,492.4 462.5,495.8 463.0,500.7 463.5,506.8 464.0,513.9 464.5,521.4 465.0,528.9 465.5,535.8 466.0,541.9 466.5,546.6 467.0,549.8 467.5,549.8 468.0,546.6 468.5,541.9 469.0,535.8 469.5,528.9 470.0,521.4 470.5,513.9 471.0,506.8 471.5,500.7 472.0,495.8 472.5,492.4 473.0,491.9 473.5,495.0 474.0,499.6 474.5,505.5 475.0,512.4 475.5,519.9 476.0,527.4 476.5,534.5 477.0,540.8 477.5,545.8 478.0,549.3 478.5,550.3 479.0,547.4 479.5,543.0 480.0,537.1 480.5,530.3 481.0,522.9 481.5,515.4 482.0,508.2 482.5,501.8 483.0,496.6 483.5,493.0 484.0,491.5 484.5,494.2 485.0,498.5 485.5,504.2 486.0,511.0 486.5,518.4 487.0,525.9 487.5,533.1 488.0,539.6 488.5,544.9 489.0,548.8 489.5,550.6 490.0,548.1 490.5,544.0 491.0,538.4 491.5,531.7 492.0,524.4 492.5,516.8 493.0,509.6 493.5,503.0 494.0,497.6 494.5,493.6 495.0,491.2 495.5,493.6 496.0,497.6 496.5,503.0 497.0,509.6 497.5,516.8 498.0,524.4 498.5,531.7 499.0,538.4 499.5,544.0 500.0,548.1 500.5,550.6 501.0,548.8 501.5,544.9 502.0,539.6 502.5,533.1 503.0,525.9 503.5,518.4 504.0,511.0 504.5,504.2 505.0,498.5 505.5,494.2 506.0,491.5 506.5,493.0 507.0,496.6 507.5,501.8 508.0,508.2 508.5,515.4 509.0,522.9 509.5,530.3 510.0,537.1 510.5,543.0 511.0,547.4 511.5,550.3 512.0,549.3 512.5,545.8 513.0,540.8 513.5,534.5 514.0,527.4 514.5,519.9 515.0,512.4 515.5,505.5 516.0,499.6 516.5,495.0 517.0,491.9 517.5,492.4 518.0,495.8 518.5,500.7 519.0,506.8 519.5,513.9 520.0,521.4 520.5,528.9 521.0,535.8 521.5,541.9 522.0,546.6 522.5,549.8 523.0,549.8 523.5,546.6 524.0,541.9 524.5,535.8 525.0,528.9 525.5,521.4 526.0,513.9 526.5,506.8 527.0,500.7 527.5,495.8 528.0,492.4 528.5,491.9 529.0,495.0 529.5,499.6 530.0,505.5 530.5,512.4 531.0,519.9 531.5,527.4 532.0,534.5 532.5,540.8 533.0,545.8 533.5,549.3 534.0,550.3 534.5,547.4 535.0,543.0 535.5,537.1 536.0,530.3 536.5,522.9 537.0,515.4 537.5,508.2 538.0,501.8 538.5,496.6 539.0,493.0 539.5,491.5 540.0,494.2 540.5,498.5 541.0,504.2 541.5,511.0 542.0,518.4 542.5,525.9 543.0,533.1 543.5,539.6 544.0,544.9 544.5,548.8 545.0,550.6 545.5,548.1 546.0,544.0 546.5,538.4 547.0,531.7 547.5,524.4 548.0,516.8 548.5,509.6 549.0,503.0 549.5,497.6 550.0,493.6 550.5,491.2 551.0,493.6 551.5,497.6 552.0,503.0 552.5,509.6 553.0,516.8 553.5,524.4 554.0,531.7 554.5,538.4 555.0,544.0 555.5,548.1 556.0,550.6 556.5,548.8 557.0,544.9 557.5,539.6 558.0,533.1 558.5,525.9 559.0,518.4 559.5,511.0 560.0,504.2 560.5,498.5 561.0,494.2 561.5,491.5 562.0,493.0 562.5,496.6 563.0,501.8 563.5,508.2 564.0,515.4 564.5,522.9 565.0,530.3 565.5,537.1 566.0,543.0 566.5,547.4 567.0,550.3 567.5,549.3 568.0,545.8 568.5,540.8 569.0,534.5 569.5,527.4 570.0,519.9 570.5,512.4 571.0,505.5 571.5,499.6 572.0,495.0 572.5,491.9 573.0,492.4 573.5,495.8 574.0,500.7 574.5,506.8 575.0,513.9 575.5,521.4 576.0,528.9 576.5,535.8 577.0,541.9 577.5,546.6 578.0,549.8 578.5,549.8 579.0,546.6 579.5,541.9 580.0,535.8 580.5,528.9 581.0,521.4 581.5,513.9 582.0,506.8 582.5,500.7 583.0,495.8 583.5,492.4 584.0,491.9 584.5,495.0 585.0,499.6 585.5,505.5 586.0,512.4 586.5,519.9 587.0,527.4 587.5,534.5 588.0,540.8 588.5,545.8 589.0,549.3 589.5,550.3 590.0,547.4 590.5,543.0 591.0,537.1 591.5,530.3 592.0,522.9 592.5,515.4 593.0,508.2 593.5,501.8 594.0,496.6 594.5,493.0 595.0,491.5 595.5,494.2 596.0,498.5 596.5,504.2 597.0,511.0 597.5,518.4 598.0,525.9 598.5,533.1 599.0,539.6 599.5,544.9 600.0,548.8 600.5,550.6 601.0,548.1 601.5,544.0 602.0,538.4 602.5,531.7 603.0,524.4 603.5,516.8 604.0,509.6 604.5,503.0 605.0,497.6 605.5,493.6 606.0,491.2 606.5,493.6 607.0,497.6 607.5,503.0 608.0,509.6 608.5,516.8 609.0,524.4 609.5,531.7 610.0,538.4 610.5,544.0 611.0,548.1 611.5,550.6 612.0,548.8 612.5,544.9 613.0,539.6 613.5,533.1 614.0,525.9 614.5,518.4 615.0,511.0 615.5,504.2 616.0,498.5 616.5,494.2 617.0,491.5 617.5,493.0 618.0,496.6 618.5,501.8 619.0,508.2 619.5,515.4 620.0,522.9 620.5,530.3 621.0,537.1 621.5,543.0 622.0,547.4 622.5,550.3 623.0,549.3 623.5,545.8 624.0,540.8 624.5,534.5 625.0,527.4 625.5,519.9 626.0,512.4 626.5,505.5 627.0,499.6 627.5,495.0 628.0,491.9 628.5,492.4 629.0,495.8 629.5,500.7 630.0,506.8 630.5,513.9 631.0,521.4 631.5,528.9 632.0,535.8 632.5,541.9 633.0,546.6 633.5,549.8 634.0,549.8 634.5,546.6 635.0,541.9 635.5,535.8 636.0,528.9 636.5,521.4 637.0,513.9 637.5,506.8 638.0,500.7 638.5,495.8 639.0,492.4 639.5,491.9 640.0,495.0 640.5,499.6 641.0,505.5 641.5,512.4 642.0,519.9 642.5,527.4 643.0,534.5 643.5,540.8 644.0,545.8 644.5,549.3 645.0,550.3 645.5,547.4 646.0,543.0 646.5,537.1 647.0,530.3 647.5,522.9 648.0,515.4 648.5,508.2 649.0,501.8 649.5,496.6 650.0,493.0 650.5,491.5 651.0,494.2 651.5,498.5 652.0,504.2 652.5,511.0 653.0,518.4 653.5,525.9 654.0,533.1 654.5,539.6 655.0,544.9 655.5,548.8 656.0,550.6 656.5,548.1 657.0,544.0 657.5,538.4 658.0,531.7 658.5,524.4 659.0,516.8 659.5,509.6 660.0,503.0 660.5,497.6 661.0,493.6 661.5,491.2 662.0,493.6 662.5,497.6 663.0,503.0 663.5,509.6 664.0,516.8 664.5,524.4 665.0,531.7 665.5,538.4 666.0,544.0 666.5,548.1 667.0,550.6 667.5,548.8 668.0,544.9 668.5,539.6 669.0,533.1 669.5,525.9 670.0,518.4 670.5,511.0 671.0,504.2 671.5,498.5 672.0,494.2 672.5,491.5 673.0,493.0 673.5,496.6 674.0,501.8 674.5,508.2 675.0,515.4 675.5,522.9 676.0,530.3 676.5,537.1 677.0,543.0 677.5,547.4 678.0,550.3 678.5,549.3 679.0,545.8 679.5,540.8 680.0,534.5 680.5,527.4 681.0,519.9 681.5,512.4 682.0,505.5 682.5,499.6 683.0,495.0 683.5,491.9 684.0,492.4 684.5,495.8 685.0,500.7 685.5,506.8 686.0,513.9 686.5,521.4 687.0,528.9 687.5,535.8 688.0,541.9 688.5,546.6 689.0,549.8 689.5,549.8 690.0,546.6 690.5,541.9 691.0,535.8 691.5,528.9 692.0,521.4 692.5,513.9 693.0,506.8 693.5,500.7 694.0,495.8 694.5,492.4 695.0,491.9 695.5,495.0 696.0,499.6 696.5,505.5 697.0,512.4 697.5,519.9 698.0,527.4 698.5,534.5 699.0,540.8 699.5,545.8 700.0,549.3 700.5,550.3 701.0,547.4 701.5,543.0 702.0,537.1 702.5,530.3 703.0,522.9 703.5,515.4 704.0,508.2 704.5,501.8 705.0,496.6 705.5,493.0 706.0,491.5 706.5,494.2 707.0,498.5 707.5,504.2 708.0,511.0 708.5,518.4 709.0,525.9 709.5,533.1 710.0,539.6 710.5,544.9 711.0,548.8 711.5,550.6 712.0,548.1 712.5,544.0 713.0,538.4 713.5,531.7 714.0,524.4 714.5,516.8 715.0,509.6 715.5,503.0 716.0,497.6 716.5,493.6 717.0,491.2 717.5,493.6 718.0,497.6 718.5,503.0 719.0,509.6 719.5,516.8 720.0,524.4 720.5,531.7 721.0,538.4 721.5,544.0 722.0,548.1 722.5,550.6 723.0,548.8 723.5,544.9 724.0,539.6 724.5,533.1 725.0,525.9 725.5,518.4 726.0,511.0 726.5,504.2 727.0,498.5 727.5,494.2 728.0,491.5 728.5,493.0 729.0,496.6 729.5,501.8 730.0,508.2 730.5,515.4 731.0,522.9 731.5,530.3 732.0,537.1 732.5,543.0 733.0,547.4 733.5,550.3 734.0,549.3 734.5,545.8 735.0,540.8 735.5,534.5 736.0,527.4 736.5,519.9 737.0,512.4 737.5,505.5 738.0,499.6 738.5,495.0 739.0,491.9 739.5,492.4 740.0,495.8 740.5,500.7 741.0,506.8 741.5,513.9 742.0,521.4 742.5,528.9 743.0,535.8 743.5,541.9 744.0,546.6 744.5,549.8 745.0,549.8 745.5,546.6 746.0,541.9 746.5,535.8 747.0,528.9 747.5,521.4 748.0,513.9 748.5,506.8 749.0,500.7 749.5,495.8 750.0,492.4 750.5,491.9 751.0,495.0 751.5,499.6 752.0,505.5 752.5,512.4 753.0,519.9 753.5,527.4 754.0,534.5 754.5,540.8 755.0,545.8 755.5,549.3 756.0,550.3 756.5,547.4 757.0,543.0 757.5,537.1 758.0,530.3 758.5,522.9 759.0,515.4 759.5,508.2 760.0,501.8 760.5,496.6 761.0,493.0 761.5,491.5 762.0,494.2 762.5,498.5 763.0,504.2 763.5,511.0 764.0,518.4 764.5,525.9 765.0,533.1 765.5,539.6 766.0,544.9 766.5,548.8 767.0,550.6 767.5,548.1 768.0,544.0 768.5,538.4 769.0,531.7 769.5,524.4 770.0,516.8 770.5,509.6 771.0,503.0 771.5,497.6 772.0,493.6 772.5,491.2 773.0,493.6 773.5,497.6 774.0,503.0 774.5,509.6 775.0,516.8 775.5,524.4 776.0,531.7 776.5,538.4 777.0,544.0 777.5,548.1 778.0,550.6 778.5,548.8 779.0,544.9 779.5,539.6 780.0,533.1 780.5,525.9 781.0,518.4 781.5,511.0 782.0,504.2 782.5,498.5 783.0,494.2 783.5,491.5 784.0,493.0 784.5,496.6 785.0,501.8 785.5,508.2 786.0,515.4 786.5,522.9 787.0,530.3 787.5,537.1 788.0,543.0 788.5,547.4 789.0,550.3 789.5,549.3 790.0,545.8 790.5,540.8 791.0,534.5 791.5,527.4 792.0,519.9 792.5,512.4 793.0,505.5 793.5,499.6 794.0,495.0 794.5,491.9 795.0,492.4 795.5,495.8 796.0,500.7 796.5,506.8 797.0,513.9 797.5,521.4 798.0,528.9 798.5,535.8 799.0,541.9 799.5,546.6 800.0,549.8 800.5,549.8 801.0,546.6 801.5,541.9 802.0,535.8 802.5,528.9 803.0,521.4 803.5,513.9 804.0,506.8 804.5,500.7 805.0,495.8 805.5,492.4 806.0,491.9 806.5,495.0 807.0,499.6 807.5,505.5 808.0,512.4 808.5,519.9 809.0,527.4 809.5,534.5 810.0,540.8 810.5,545.8 811.0,549.3 811.5,550.3 812.0,547.4 812.5,543.0 813.0,537.1 813.5,530.3 814.0,522.9 814.5,515.4 815.0,508.2 815.5,501.8 816.0,496.6 816.5,493.0 817.0,491.5 817.5,494.2 818.0,498.5 818.5,504.2 819.0,511.0 819.5,518.4 820.0,525.9 820.5,533.1 821.0,539.6 821.5,544.9 822.0,548.8 822.5,550.6 823.0,548.1 823.5,544.0 824.0,538.4 824.5,531.7 825.0,524.4 825.5,516.8 826.0,509.6 826.5,503.0 827.0,497.6 827.5,493.6 828.0,491.2 828.5,493.6 829.0,497.6 829.5,503.0 830.0,509.6 830.5,516.8 831.0,524.4 831.5,531.7 832.0,538.4 832.5,544.0 833.0,548.1 833.5,550.6 834.0,548.8 834.5,544.9 835.0,539.6 835.5,533.1 836.0,525.9" fill="none" stroke="#a1111f" stroke-width="0.90" stroke-linejoin="round" opacity="1.00"/><line x1="628.00" y1="48.0" x2="628.00" y2="557.5" stroke="#b0b0b0" stroke-width="1" stroke-dasharray="2 2.5" opacity="0.75"/></g><line x1="420.0" y1="104.50" x2="835.0" y2="104.50" stroke="#747474" stroke-width="1"/><line x1="420.0" y1="105.50" x2="835.0" y2="105.50" stroke="#2a2a2a" stroke-width="1"/><line x1="420.0" y1="180.50" x2="835.0" y2="180.50" stroke="#747474" stroke-width="1"/><line x1="420.0" y1="181.50" x2="835.0" y2="181.50" stroke="#2a2a2a" stroke-width="1"/><line x1="420.0" y1="255.50" x2="835.0" y2="255.50" stroke="#747474" stroke-width="1"/><line x1="420.0" y1="256.50" x2="835.0" y2="256.50" stroke="#2a2a2a" stroke-width="1"/><line x1="420.0" y1="331.50" x2="835.0" y2="331.50" stroke="#747474" stroke-width="1"/><line x1="420.0" y1="332.50" x2="835.0" y2="332.50" stroke="#2a2a2a" stroke-width="1"/><line x1="420.0" y1="406.50" x2="835.0" y2="406.50" stroke="#747474" stroke-width="1"/><line x1="420.0" y1="407.50" x2="835.0" y2="407.50" stroke="#2a2a2a" stroke-width="1"/><line x1="420.0" y1="482.50" x2="835.0" y2="482.50" stroke="#747474" stroke-width="1"/><line x1="420.0" y1="483.50" x2="835.0" y2="483.50" stroke="#2a2a2a" stroke-width="1"/></svg>
<svg style="left:0;top:0" width="1000" height="604"><path d="M423.2 60.5 H433.7 L439.3 66.7 L433.7 72.9 H423.2 Q421.7 72.9 421.7 71.4 V62.0 Q421.7 60.5 423.2 60.5 Z" fill="#1c1b04" stroke="#7a7510" stroke-width="1" stroke-linejoin="round"/></svg><span class="t" style="left:426.27px;top:63.62px;font-size:6.30px;color:#d8d020;">C1</span><svg style="left:0;top:0" width="1000" height="604"><path d="M423.2 136.6 H433.7 L439.3 142.8 L433.7 148.9 H423.2 Q421.7 148.9 421.7 147.4 V138.1 Q421.7 136.6 423.2 136.6 Z" fill="#06262a" stroke="#1fb5c0" stroke-width="1" stroke-linejoin="round"/></svg><span class="t" style="left:426.27px;top:139.72px;font-size:6.30px;color:#25c6d4;">C2</span><svg style="left:0;top:0" width="1000" height="604"><path d="M423.2 212.1 H433.7 L439.3 218.2 L433.7 224.4 H423.2 Q421.7 224.4 421.7 222.9 V213.6 Q421.7 212.1 423.2 212.1 Z" fill="#1c0508" stroke="#8a1226" stroke-width="1" stroke-linejoin="round"/></svg><span class="t" style="left:426.27px;top:215.22px;font-size:6.30px;color:#e8e8e8;">C3</span><svg style="left:0;top:0" width="1000" height="604"><path d="M423.2 287.6 H433.7 L439.3 293.8 L433.7 299.9 H423.2 Q421.7 299.9 421.7 298.4 V289.1 Q421.7 287.6 423.2 287.6 Z" fill="#1a2506" stroke="#86bd22" stroke-width="1" stroke-linejoin="round"/></svg><span class="t" style="left:426.27px;top:290.72px;font-size:6.30px;color:#8fd02a;">C4</span><svg style="left:0;top:0" width="1000" height="604"><path d="M423.2 363.1 H433.7 L439.3 369.2 L433.7 375.4 H423.2 Q421.7 375.4 421.7 373.9 V364.6 Q421.7 363.1 423.2 363.1 Z" fill="#1f1204" stroke="#a65c10" stroke-width="1" stroke-linejoin="round"/></svg><span class="t" style="left:426.27px;top:366.22px;font-size:6.30px;color:#f08a1c;">C5</span><svg style="left:0;top:0" width="1000" height="604"><path d="M423.2 438.6 H433.7 L439.3 444.8 L433.7 450.9 H423.2 Q421.7 450.9 421.7 449.4 V440.1 Q421.7 438.6 423.2 438.6 Z" fill="#2020e2" stroke="#2424e6" stroke-width="1" stroke-linejoin="round"/></svg><span class="t" style="left:426.27px;top:441.72px;font-size:6.30px;color:#f4f4f4;">C6</span><svg style="left:0;top:0" width="1000" height="604"><path d="M423.2 514.8 H433.7 L439.3 521.0 L433.7 527.2 H423.2 Q421.7 527.2 421.7 525.7 V516.2 Q421.7 514.8 423.2 514.8 Z" fill="#140405" stroke="#8a1620" stroke-width="1" stroke-linejoin="round"/></svg><span class="t" style="left:424.80px;top:517.92px;font-size:6.30px;color:#f0f0f0;transform:scaleX(1.0476);">M 3</span><span class="t" style="left:446.00px;top:516.53px;font-size:9.00px;color:#a01422;transform:scaleX(1.1199);">PQ:Filtered ch1(meas1)</span>
<span class="t" style="left:816.13px;top:33.77px;font-size:7.30px;color:#b8b010;transform:scaleX(0.9000);">560 V</span><span class="t" style="left:816.13px;top:48.72px;font-size:7.30px;color:#b8b010;transform:scaleX(0.9000);">280 V</span><span class="t" style="left:813.95px;top:78.62px;font-size:7.30px;color:#b8b010;transform:scaleX(0.9000);">-280 V</span><span class="t" style="left:813.95px;top:93.57px;font-size:7.30px;color:#b8b010;transform:scaleX(0.9000);">-560 V</span><span class="t" style="left:818.32px;top:109.27px;font-size:7.30px;color:#1aa7b2;transform:scaleX(0.9000);">5.6 A</span><span class="t" style="left:818.32px;top:124.22px;font-size:7.30px;color:#1aa7b2;transform:scaleX(0.9000);">2.8 A</span><span class="t" style="left:823.79px;top:139.17px;font-size:7.30px;color:#1aa7b2;transform:scaleX(0.9000);">0 A</span><span class="t" style="left:816.13px;top:154.12px;font-size:7.30px;color:#1aa7b2;transform:scaleX(0.9000);">-2.8 A</span><span class="t" style="left:816.13px;top:169.07px;font-size:7.30px;color:#1aa7b2;transform:scaleX(0.9000);">-5.6 A</span><span class="t" style="left:816.13px;top:184.77px;font-size:7.30px;color:#b8142e;transform:scaleX(0.9000);">560 V</span><span class="t" style="left:816.13px;top:199.72px;font-size:7.30px;color:#b8142e;transform:scaleX(0.9000);">280 V</span><span class="t" style="left:823.44px;top:214.67px;font-size:7.30px;color:#b8142e;transform:scaleX(0.9000);">0 V</span><span class="t" style="left:813.95px;top:229.62px;font-size:7.30px;color:#b8142e;transform:scaleX(0.9000);">-280 V</span><span class="t" style="left:813.95px;top:244.57px;font-size:7.30px;color:#b8142e;transform:scaleX(0.9000);">-560 V</span><span class="t" style="left:823.79px;top:260.27px;font-size:7.30px;color:#7fb020;transform:scaleX(0.9000);">6 A</span><span class="t" style="left:823.79px;top:275.22px;font-size:7.30px;color:#7fb020;transform:scaleX(0.9000);">3 A</span><span class="t" style="left:823.79px;top:290.17px;font-size:7.30px;color:#7fb020;transform:scaleX(0.9000);">0 A</span><span class="t" style="left:821.61px;top:305.12px;font-size:7.30px;color:#7fb020;transform:scaleX(0.9000);">-3 A</span><span class="t" style="left:821.61px;top:320.07px;font-size:7.30px;color:#7fb020;transform:scaleX(0.9000);">-6 A</span><span class="t" style="left:816.13px;top:335.77px;font-size:7.30px;color:#c06a10;transform:scaleX(0.9000);">560 V</span><span class="t" style="left:816.13px;top:350.72px;font-size:7.30px;color:#c06a10;transform:scaleX(0.9000);">280 V</span><span class="t" style="left:823.44px;top:365.67px;font-size:7.30px;color:#c06a10;transform:scaleX(0.9000);">0 V</span><span class="t" style="left:813.95px;top:380.62px;font-size:7.30px;color:#c06a10;transform:scaleX(0.9000);">-280 V</span><span class="t" style="left:813.95px;top:395.57px;font-size:7.30px;color:#c06a10;transform:scaleX(0.9000);">-560 V</span><span class="t" style="left:818.32px;top:411.27px;font-size:7.30px;color:#2224cc;transform:scaleX(0.9000);">5.6 A</span><span class="t" style="left:818.32px;top:426.22px;font-size:7.30px;color:#2224cc;transform:scaleX(0.9000);">2.8 A</span><span class="t" style="left:823.79px;top:441.17px;font-size:7.30px;color:#2224cc;transform:scaleX(0.9000);">0 A</span><span class="t" style="left:816.13px;top:456.12px;font-size:7.30px;color:#2224cc;transform:scaleX(0.9000);">-2.8 A</span><span class="t" style="left:816.13px;top:471.07px;font-size:7.30px;color:#2224cc;transform:scaleX(0.9000);">-5.6 A</span><span class="t" style="left:803.35px;top:487.47px;font-size:7.30px;color:#96101e;transform:scaleX(0.9000);">313.570 V</span><span class="t" style="left:803.35px;top:502.57px;font-size:7.30px;color:#96101e;transform:scaleX(0.9000);">156.785 V</span><span class="t" style="left:823.44px;top:517.67px;font-size:7.30px;color:#96101e;transform:scaleX(0.9000);">0 V</span><span class="t" style="left:801.17px;top:532.77px;font-size:7.30px;color:#96101e;transform:scaleX(0.9000);">-156.785 V</span><span class="t" style="left:801.17px;top:547.87px;font-size:7.30px;color:#96101e;transform:scaleX(0.9000);">-313.570 V</span>
<svg id="zoomicon" style="left:812px;top:32px" width="22" height="20" viewBox="0 0 22 20"><polygon points="2,1 20,1 20,18.4" fill="#5c5c5c"/><circle cx="16.4" cy="4.3" r="2.0" fill="none" stroke="#e0e0e0" stroke-width="0.9"/><line x1="14.9" y1="5.9" x2="11.2" y2="9.6" stroke="#e0e0e0" stroke-width="1.2"/></svg><svg id="trigarrow" style="left:822px;top:61px" width="14" height="13" viewBox="0 0 14 13"><polygon points="2,5.8 8.4,1 8.4,10.6" fill="#efe75a" stroke="#8c7c28" stroke-width="0.6" stroke-dasharray="1 0.8"/></svg><span class="t" style="left:826.61px;top:64.54px;font-size:5.50px;color:#cfc23c;font-weight:bold;">T</span><svg id="brackets" style="left:556px;top:18px" width="146" height="12" viewBox="0 0 146 12"><path d="M6 1.2 H3.2 V10.3 H6" fill="none" stroke="#c4c4c4" stroke-width="1.1"/><path d="M139.5 1.2 H142.3 V10.3 H139.5" fill="none" stroke="#c4c4c4" stroke-width="1.1"/></svg><svg id="trigpos" style="left:619px;top:16px" width="18" height="34" viewBox="0 0 18 34"><polygon points="4.9,0.8 12.4,0.8 8.65,3.8" fill="#f08414"/><rect x="5.3" y="5" width="6.6" height="6.6" rx="0.8" fill="#000" stroke="#f08414" stroke-width="1.1"/><line x1="8.7" y1="11.8" x2="8.7" y2="14" stroke="#f08414" stroke-width="1.2"/><polygon points="3.8,13.5 13.7,13.5 8.75,18.6" fill="#f08414"/><path d="M3.6 19.3 H13.9 V29.6 H10.6 L8.75 32.4 L6.9 29.6 H3.6 Z" fill="#000" stroke="#f08414" stroke-width="1.1" stroke-linejoin="round"/></svg><span class="t" style="left:625.58px;top:21.11px;font-size:6.60px;color:#f08414;font-weight:bold;">T</span><span class="t" style="left:625.48px;top:37.17px;font-size:7.60px;color:#f08414;font-weight:bold;">T</span>
<span class="t" style="left:930.30px;top:0.34px;font-size:14.60px;color:#ffffff;font-weight:bold;transform:scaleX(0.9364);">Tektronix</span><svg id="tekk" style="left:942px;top:3px" width="14" height="12" viewBox="0 0 14 12"><path d="M11.9 2.0 L5.0 10.2" stroke="#1cc4e4" stroke-width="2.1" fill="none"/></svg><svg style="left:839px;top:281px" width="5" height="15"><rect x="1.2" y="0.7" width="1.9" height="1.9" fill="#e4e4e4"/><rect x="1.2" y="5.5" width="1.9" height="1.9" fill="#e4e4e4"/><rect x="1.2" y="10.4" width="1.9" height="1.9" fill="#e4e4e4"/></svg><div class="abs" id="addnew" style="left:844.3px;top:15px;width:156px;height:60px;box-sizing:border-box;border:1px solid #4a4a4a;border-right:none;"></div><div class="abs" style="left:960px;top:16px;width:1px;height:58px;background:#484848;"></div><div class="abs" style="left:844.3px;top:75px;width:1px;height:485px;background:#404040;"></div><div class="abs" style="left:844.3px;top:559px;width:156px;height:1px;background:#404040;"></div><span class="t" style="left:881.30px;top:16.93px;font-size:9.30px;color:#f0f0f0;font-weight:bold;transform:scaleX(0.9049);">Add New...</span><div class="btn" style="left:848.3px;top:29.1px;width:33.0px;height:19.4px;"></div><div class="btn" style="left:848.3px;top:53.4px;width:33.0px;height:19.4px;"></div><div class="btn" style="left:886.0px;top:29.1px;width:33.0px;height:19.4px;"></div><div class="btn" style="left:886.0px;top:53.4px;width:33.0px;height:19.4px;"></div><div class="btn" style="left:923.4px;top:29.1px;width:33.0px;height:19.4px;"></div><div class="btn" style="left:923.4px;top:53.4px;width:33.0px;height:19.4px;"></div><div class="btn" style="left:964.3px;top:29.1px;width:32.4px;height:19.4px;"></div><div class="btn" style="left:964.3px;top:53.4px;width:32.4px;height:19.4px;"></div><span class="t" style="left:851.70px;top:34.58px;font-size:9.00px;color:#d8d8d8;transform:scaleX(0.8345);">Cursors</span><span class="t" style="left:889.60px;top:34.58px;font-size:9.00px;color:#d8d8d8;transform:scaleX(0.9066);">Callout</span><span class="t" style="left:927.40px;top:30.02px;font-size:8.60px;color:#d8d8d8;transform:scaleX(0.8724);">Results</span><span class="t" style="left:930.65px;top:39.32px;font-size:8.60px;color:#d8d8d8;transform:scaleX(0.9004);">Table</span><span class="t" style="left:849.60px;top:58.98px;font-size:9.00px;color:#d8d8d8;transform:scaleX(0.8682);">Measure</span><span class="t" style="left:889.90px;top:58.98px;font-size:9.00px;color:#d8d8d8;transform:scaleX(0.8482);">Search</span><span class="t" style="left:932.60px;top:58.98px;font-size:9.00px;color:#d8d8d8;transform:scaleX(0.9152);">Plot</span><span class="t" style="left:967.50px;top:58.98px;font-size:9.00px;color:#d8d8d8;transform:scaleX(0.9138);">More...</span><svg id="zoombox" style="left:972px;top:31px" width="18" height="16" viewBox="0 0 18 16"><rect x="2.2" y="1.6" width="11.6" height="10.2" fill="none" stroke="#dcdcdc" stroke-width="1.2" stroke-dasharray="1.8 1.6"/><circle cx="8.6" cy="5.2" r="2.7" fill="none" stroke="#e4e4e4" stroke-width="1"/><line x1="6.6" y1="7.3" x2="3.4" y2="10.6" stroke="#e4e4e4" stroke-width="1.2"/><path d="M12.7 9.2 L12.7 13.8 L13.9 12.7 L14.9 14.5 L15.7 14.1 L14.8 12.4 L16.2 12.2 Z" fill="#ececec"/></svg>
<div class="abs" id="meas1" style="left:846.6px;top:84.3px;width:152.6px;height:140.6px;background:#d2d2d2;border-radius:3px;overflow:hidden;"><div class="abs" style="left:0;top:0;width:153px;height:9.3px;background:#000;"></div><div class="abs" style="left:0;top:99.3px;width:153px;height:1px;background:#6e6e6e;"></div><div class="abs" style="left:0;top:100.3px;width:153px;height:1px;background:#ececec;"></div></div><span class="t" style="left:849.60px;top:84.26px;font-size:9.50px;color:#ffffff;transform:scaleX(0.8379);">IMDA Meas 1:</span><span class="t" style="left:902.50px;top:84.26px;font-size:9.50px;color:#f0f0f0;transform:scaleX(0.7755);">Cyc Power Quality'</span><span class="t" style="left:897.30px;top:94.58px;font-size:9.00px;color:#414141;transform:scaleX(0.7689);">Vab:Ia</span><span class="t" style="left:931.50px;top:94.58px;font-size:9.00px;color:#414141;transform:scaleX(0.7917);">Vbc:Ib</span><span class="t" style="left:965.60px;top:94.58px;font-size:9.00px;color:#414141;transform:scaleX(0.7675);">Vca:Ic</span><svg style="left:897.9px;top:105.2px" width="29" height="8" viewBox="0 0 29 8"><clipPath id="pc897"><rect x="0.4" y="0.4" width="27.8" height="7.0" rx="3.5"/></clipPath><g clip-path="url(#pc897)"><rect width="29" height="8" fill="#eee81e"/><polygon points="16.6,0 29,0 29,8 12.4,8" fill="#22c4d2"/></g><rect x="0.4" y="0.4" width="27.8" height="7.0" rx="3.5" fill="none" stroke="#707070" stroke-width="0.6"/></svg><span class="t" style="left:903.85px;top:106.70px;font-size:5.20px;color:#5a5a10;">1</span><span class="t" style="left:917.85px;top:106.70px;font-size:5.20px;color:#0a4a52;">2</span><svg style="left:931.5px;top:105.2px" width="29" height="8" viewBox="0 0 29 8"><clipPath id="pc931"><rect x="0.4" y="0.4" width="27.8" height="7.0" rx="3.5"/></clipPath><g clip-path="url(#pc931)"><rect width="29" height="8" fill="#e8305c"/><polygon points="16.6,0 29,0 29,8 12.4,8" fill="#86d224"/></g><rect x="0.4" y="0.4" width="27.8" height="7.0" rx="3.5" fill="none" stroke="#707070" stroke-width="0.6"/></svg><span class="t" style="left:937.45px;top:106.70px;font-size:5.20px;color:#f4b0bc;">3</span><span class="t" style="left:951.45px;top:106.70px;font-size:5.20px;color:#2a4a10;">4</span><svg style="left:965.6px;top:105.2px" width="29" height="8" viewBox="0 0 29 8"><clipPath id="pc965"><rect x="0.4" y="0.4" width="27.8" height="7.0" rx="3.5"/></clipPath><g clip-path="url(#pc965)"><rect width="29" height="8" fill="#f08a1c"/><polygon points="16.6,0 29,0 29,8 12.4,8" fill="#2428d2"/></g><rect x="0.4" y="0.4" width="27.8" height="7.0" rx="3.5" fill="none" stroke="#707070" stroke-width="0.6"/></svg><span class="t" style="left:971.55px;top:106.70px;font-size:5.20px;color:#7a3a08;">5</span><span class="t" style="left:985.55px;top:106.70px;font-size:5.20px;color:#c0c4ff;">6</span><span class="t" style="left:849.80px;top:114.88px;font-size:9.00px;color:#414141;transform:scaleX(0.9309);">V</span><span class="t" style="left:855.60px;top:119.30px;font-size:5.20px;color:#414141;transform:scaleX(0.7111);">RMS</span><span class="t" style="left:864.10px;top:114.88px;font-size:9.00px;color:#414141;transform:scaleX(0.8000);">(V):</span><span class="t" style="left:849.80px;top:124.66px;font-size:9.00px;color:#414141;transform:scaleX(0.9309);">V</span><span class="t" style="left:855.60px;top:129.08px;font-size:5.20px;color:#414141;transform:scaleX(0.7440);">MAG</span><span class="t" style="left:864.70px;top:124.66px;font-size:9.00px;color:#414141;transform:scaleX(0.8000);">(V):</span><span class="t" style="left:849.80px;top:134.44px;font-size:9.00px;color:#414141;transform:scaleX(0.6360);">I</span><span class="t" style="left:851.60px;top:138.86px;font-size:5.20px;color:#414141;transform:scaleX(0.7111);">RMS</span><span class="t" style="left:860.10px;top:134.44px;font-size:9.00px;color:#414141;transform:scaleX(0.8138);">(A):</span><span class="t" style="left:849.80px;top:144.22px;font-size:9.00px;color:#414141;transform:scaleX(0.6360);">I</span><span class="t" style="left:851.60px;top:148.64px;font-size:5.20px;color:#414141;transform:scaleX(0.7440);">MAG</span><span class="t" style="left:860.70px;top:144.22px;font-size:9.00px;color:#414141;transform:scaleX(0.8138);">(A):</span><span class="t" style="left:849.80px;top:154.00px;font-size:9.00px;color:#414141;transform:scaleX(0.7473);">V CF:</span><span class="t" style="left:849.80px;top:163.78px;font-size:9.00px;color:#414141;transform:scaleX(0.7026);">I CF:</span><span class="t" style="left:849.80px;top:173.56px;font-size:9.00px;color:#414141;transform:scaleX(0.7385);">Phase:</span><span class="t" style="left:897.30px;top:114.88px;font-size:9.00px;color:#414141;transform:scaleX(0.8122);">252.0</span><span class="t" style="left:931.50px;top:114.88px;font-size:9.00px;color:#414141;transform:scaleX(0.8122);">252.6</span><span class="t" style="left:965.60px;top:114.88px;font-size:9.00px;color:#414141;transform:scaleX(0.8122);">253.1</span><span class="t" style="left:897.30px;top:124.66px;font-size:9.00px;color:#414141;transform:scaleX(0.8122);">218.3</span><span class="t" style="left:931.50px;top:124.66px;font-size:9.00px;color:#414141;transform:scaleX(0.8122);">218.9</span><span class="t" style="left:965.60px;top:124.66px;font-size:9.00px;color:#414141;transform:scaleX(0.8122);">219.4</span><span class="t" style="left:897.30px;top:134.44px;font-size:9.00px;color:#414141;transform:scaleX(0.8122);">1.657</span><span class="t" style="left:931.50px;top:134.44px;font-size:9.00px;color:#414141;transform:scaleX(0.8122);">1.586</span><span class="t" style="left:965.60px;top:134.44px;font-size:9.00px;color:#414141;transform:scaleX(0.8122);">1.632</span><span class="t" style="left:897.30px;top:144.22px;font-size:9.00px;color:#414141;transform:scaleX(0.8122);">1.652</span><span class="t" style="left:931.50px;top:144.22px;font-size:9.00px;color:#414141;transform:scaleX(0.8122);">1.582</span><span class="t" style="left:965.60px;top:144.22px;font-size:9.00px;color:#414141;transform:scaleX(0.8122);">1.628</span><span class="t" style="left:897.30px;top:154.00px;font-size:9.00px;color:#414141;transform:scaleX(0.8122);">1.469</span><span class="t" style="left:931.50px;top:154.00px;font-size:9.00px;color:#414141;transform:scaleX(0.8122);">1.325</span><span class="t" style="left:965.60px;top:154.00px;font-size:9.00px;color:#414141;transform:scaleX(0.8122);">1.318</span><span class="t" style="left:897.30px;top:163.78px;font-size:9.00px;color:#414141;transform:scaleX(0.8122);">1.603</span><span class="t" style="left:931.50px;top:163.78px;font-size:9.00px;color:#414141;transform:scaleX(0.8122);">1.580</span><span class="t" style="left:965.60px;top:163.78px;font-size:9.00px;color:#414141;transform:scaleX(0.8122);">1.568</span><span class="t" style="left:896.80px;top:173.56px;font-size:9.00px;color:#414141;transform:scaleX(0.8348);">-32.96 °</span><span class="t" style="left:931.00px;top:173.56px;font-size:9.00px;color:#414141;transform:scaleX(0.8348);">-36.56 °</span><span class="t" style="left:965.00px;top:173.56px;font-size:9.00px;color:#414141;transform:scaleX(0.8529);">-36.11 °</span><span class="t" style="left:849.80px;top:185.58px;font-size:9.00px;color:#414141;transform:scaleX(0.7471);">Freq:</span><span class="t" style="left:924.50px;top:185.58px;font-size:9.00px;color:#414141;transform:scaleX(0.8160);">60.00 Hz</span><span class="t" style="left:849.80px;top:195.58px;font-size:9.00px;color:#414141;transform:scaleX(0.7858);">Σ TrPwr:</span><span class="t" style="left:924.50px;top:195.58px;font-size:9.00px;color:#414141;transform:scaleX(0.8414);">1.006 kW</span><span class="t" style="left:849.80px;top:205.58px;font-size:9.00px;color:#414141;transform:scaleX(0.7824);">Σ RePwr:</span><span class="t" style="left:924.50px;top:205.58px;font-size:9.00px;color:#414141;transform:scaleX(0.8047);">709.4 VAR</span><span class="t" style="left:849.80px;top:215.58px;font-size:9.00px;color:#414141;transform:scaleX(0.8064);">Σ ApPwr:</span><span class="t" style="left:924.50px;top:215.58px;font-size:9.00px;color:#414141;transform:scaleX(0.8318);">1.232 kVA</span>
<div class="abs" style="left:1.5px;top:561.6px;width:47.2px;height:40.6px;background:#d4d4d4;border-radius:2.5px;overflow:hidden;box-shadow:0 0 0 1px #1b1b1b;"><div class="abs" style="left:0;top:0;width:48px;height:10px;background:#59591a;"></div></div><span class="t" style="left:4.20px;top:562.45px;font-size:8.80px;color:#e8e020;transform:scaleX(0.8282);">Ch 1</span><span class="t" style="left:5.10px;top:572.78px;font-size:9.00px;color:#474747;transform:scaleX(0.8047);">140 V/div</span><span class="t" style="left:5.10px;top:582.58px;font-size:9.00px;color:#474747;transform:scaleX(0.8512);">1 MΩ</span><span class="t" style="left:5.10px;top:592.38px;font-size:9.00px;color:#474747;transform:scaleX(0.7801);">1 THz</span><svg style="left:29.0px;top:581.6px" width="8" height="8" viewBox="0 0 8 8"><path d="M0.6 4.4 C1.0 0.8 2.8 0.6 3.6 3.8 C4.4 7.2 6.0 7.4 6.8 3.6" fill="none" stroke="#3a3a3a" stroke-width="1"/></svg><div class="abs" style="left:51.0px;top:561.6px;width:47.2px;height:40.6px;background:#d4d4d4;border-radius:2.5px;overflow:hidden;box-shadow:0 0 0 1px #1b1b1b;"><div class="abs" style="left:0;top:0;width:48px;height:10px;background:#0f5960;"></div></div><span class="t" style="left:53.65px;top:562.45px;font-size:8.80px;color:#25d0dc;transform:scaleX(0.8605);">Ch 2</span><span class="t" style="left:54.55px;top:572.78px;font-size:9.00px;color:#474747;transform:scaleX(0.8688);">1.4 A/div</span><span class="t" style="left:54.55px;top:582.58px;font-size:9.00px;color:#474747;transform:scaleX(0.8512);">1 MΩ</span><span class="t" style="left:54.55px;top:592.38px;font-size:9.00px;color:#474747;transform:scaleX(0.7801);">1 THz</span><svg style="left:78.5px;top:581.6px" width="8" height="8" viewBox="0 0 8 8"><path d="M0.6 4.4 C1.0 0.8 2.8 0.6 3.6 3.8 C4.4 7.2 6.0 7.4 6.8 3.6" fill="none" stroke="#3a3a3a" stroke-width="1"/></svg><div class="abs" style="left:100.4px;top:561.6px;width:47.2px;height:40.6px;background:#d4d4d4;border-radius:2.5px;overflow:hidden;box-shadow:0 0 0 1px #1b1b1b;"><div class="abs" style="left:0;top:0;width:48px;height:10px;background:#4b2129;"></div></div><span class="t" style="left:103.10px;top:562.45px;font-size:8.80px;color:#e0e0e0;transform:scaleX(0.8605);">Ch 3</span><span class="t" style="left:104.00px;top:572.78px;font-size:9.00px;color:#474747;transform:scaleX(0.8047);">140 V/div</span><span class="t" style="left:104.00px;top:582.58px;font-size:9.00px;color:#474747;transform:scaleX(0.8512);">1 MΩ</span><span class="t" style="left:104.00px;top:592.38px;font-size:9.00px;color:#474747;transform:scaleX(0.7801);">1 THz</span><div class="abs" style="left:149.9px;top:561.6px;width:47.2px;height:40.6px;background:#d4d4d4;border-radius:2.5px;overflow:hidden;box-shadow:0 0 0 1px #1b1b1b;"><div class="abs" style="left:0;top:0;width:48px;height:10px;background:#3a5119;"></div></div><span class="t" style="left:152.55px;top:562.45px;font-size:8.80px;color:#9ad82a;transform:scaleX(0.8605);">Ch 4</span><span class="t" style="left:153.45px;top:572.78px;font-size:9.00px;color:#474747;transform:scaleX(0.8688);">1.5 A/div</span><span class="t" style="left:153.45px;top:582.58px;font-size:9.00px;color:#474747;transform:scaleX(0.8512);">1 MΩ</span><span class="t" style="left:153.45px;top:592.38px;font-size:9.00px;color:#474747;transform:scaleX(0.7801);">1 THz</span><svg style="left:177.4px;top:581.6px" width="8" height="8" viewBox="0 0 8 8"><path d="M0.6 4.4 C1.0 0.8 2.8 0.6 3.6 3.8 C4.4 7.2 6.0 7.4 6.8 3.6" fill="none" stroke="#3a3a3a" stroke-width="1"/></svg><div class="abs" style="left:199.3px;top:561.6px;width:47.2px;height:40.6px;background:#d4d4d4;border-radius:2.5px;overflow:hidden;box-shadow:0 0 0 1px #1b1b1b;"><div class="abs" style="left:0;top:0;width:48px;height:10px;background:#5a3a16;"></div></div><span class="t" style="left:202.00px;top:562.45px;font-size:8.80px;color:#f08a1c;transform:scaleX(0.8605);">Ch 5</span><span class="t" style="left:202.90px;top:572.78px;font-size:9.00px;color:#474747;transform:scaleX(0.8047);">140 V/div</span><span class="t" style="left:202.90px;top:582.58px;font-size:9.00px;color:#474747;transform:scaleX(0.8512);">1 MΩ</span><span class="t" style="left:202.90px;top:592.38px;font-size:9.00px;color:#474747;transform:scaleX(0.7801);">1 THz</span><div class="abs" style="left:248.8px;top:561.6px;width:47.2px;height:40.6px;background:#d4d4d4;border-radius:2.5px;overflow:hidden;box-shadow:0 0 0 1px #1b1b1b;"><div class="abs" style="left:0;top:0;width:48px;height:10px;background:#2030e2;"></div></div><span class="t" style="left:251.45px;top:562.45px;font-size:8.80px;color:#ffffff;transform:scaleX(0.8605);">Ch 6</span><span class="t" style="left:252.35px;top:572.78px;font-size:9.00px;color:#474747;transform:scaleX(0.8688);">1.4 A/div</span><span class="t" style="left:252.35px;top:582.58px;font-size:9.00px;color:#474747;transform:scaleX(0.8512);">1 MΩ</span><span class="t" style="left:252.35px;top:592.38px;font-size:9.00px;color:#474747;transform:scaleX(0.7801);">1 THz</span><svg style="left:276.2px;top:581.6px" width="8" height="8" viewBox="0 0 8 8"><path d="M0.6 4.4 C1.0 0.8 2.8 0.6 3.6 3.8 C4.4 7.2 6.0 7.4 6.8 3.6" fill="none" stroke="#3a3a3a" stroke-width="1"/></svg><div class="abs" style="left:298.2px;top:561.6px;width:47.2px;height:40.6px;background:#d4d4d4;border-radius:2.5px;overflow:hidden;box-shadow:0 0 0 1px #1b1b1b;"><div class="abs" style="left:0;top:0;width:48px;height:10px;background:#3e1c1e;"></div></div><span class="t" style="left:300.60px;top:562.45px;font-size:8.80px;color:#f0f0f0;font-weight:bold;transform:scaleX(0.9148);">Math 3</span><span class="t" style="left:300.80px;top:572.78px;font-size:9.00px;color:#474747;transform:scaleX(0.8092);">78.3925 V…</span><span class="t" style="left:300.80px;top:582.58px;font-size:9.00px;color:#474747;transform:scaleX(0.8524);">Static[low…</span><span class="t" style="left:300.80px;top:592.38px;font-size:9.00px;color:#474747;transform:scaleX(0.8131);">Meas 1</span>
<div class="abs" style="left:590px;top:561px;width:1px;height:43px;background:#484848;"></div><div class="abs" style="left:942.5px;top:561px;width:1px;height:43px;background:#1c1c1c;"></div><div class="btn" style="left:596.2px;top:562px;width:20.6px;height:40px;border-radius:3.5px;border-color:#505050;"></div><div class="abs" style="left:598.7px;top:565.6px;width:15.6px;height:1.2px;background:#94d424;"></div><span class="t" style="left:599.50px;top:571.72px;font-size:8.60px;color:#c6c6c6;transform:scaleX(0.9152);">Add</span><span class="t" style="left:599.00px;top:580.72px;font-size:8.60px;color:#c6c6c6;transform:scaleX(0.8719);">New</span><span class="t" style="left:597.50px;top:589.92px;font-size:8.60px;color:#c6c6c6;transform:scaleX(0.9419);">Math</span><div class="btn" style="left:619.7px;top:562px;width:20.6px;height:40px;border-radius:3.5px;border-color:#505050;"></div><div class="abs" style="left:622.2px;top:565.6px;width:15.6px;height:1.2px;background:#c2ccd2;"></div><span class="t" style="left:623.00px;top:571.72px;font-size:8.60px;color:#c6c6c6;transform:scaleX(0.9152);">Add</span><span class="t" style="left:622.50px;top:580.72px;font-size:8.60px;color:#c6c6c6;transform:scaleX(0.8719);">New</span><span class="t" style="left:624.20px;top:589.92px;font-size:8.60px;color:#c6c6c6;transform:scaleX(0.8673);">Ref</span><div class="btn" style="left:643.2px;top:562px;width:20.6px;height:40px;border-radius:3.5px;border-color:#505050;"></div><div class="abs" style="left:645.7px;top:565.6px;width:15.6px;height:1.2px;background:#c24ae6;"></div><span class="t" style="left:646.50px;top:571.72px;font-size:8.60px;color:#c6c6c6;transform:scaleX(0.9152);">Add</span><span class="t" style="left:646.00px;top:580.72px;font-size:8.60px;color:#c6c6c6;transform:scaleX(0.8719);">New</span><span class="t" style="left:647.50px;top:589.92px;font-size:8.60px;color:#c6c6c6;transform:scaleX(0.8101);">Bus</span><div class="btn" style="left:666.7px;top:562px;width:20.6px;height:40px;border-radius:3.5px;border-color:#505050;"></div><div class="abs" style="left:669.2px;top:565.6px;width:15.6px;height:1.2px;background:#505050;"></div><span class="t" style="left:670.00px;top:571.72px;font-size:8.60px;color:#c6c6c6;transform:scaleX(0.9152);">Add</span><span class="t" style="left:669.50px;top:580.72px;font-size:8.60px;color:#c6c6c6;transform:scaleX(0.8719);">New</span><span class="t" style="left:667.20px;top:589.92px;font-size:8.60px;color:#c6c6c6;transform:scaleX(0.8041);">Scope</span>
<div class="abs" style="left:693.6px;top:562.4px;width:103.2px;height:39.4px;background:#d4d4d4;border-radius:2.5px;overflow:hidden;box-shadow:0 0 0 1px #1b1b1b;"><div class="abs" style="left:0;top:0;width:103.2px;height:9.5px;background:#626262;"></div></div><span class="t" style="left:696.00px;top:562.75px;font-size:8.80px;color:#f4f4f4;transform:scaleX(0.9594);">Horizontal</span><span class="t" style="left:695.70px;top:573.28px;font-size:9.00px;color:#474747;transform:scaleX(0.8109);">62.4999 ms/div</span><span class="t" style="left:751.00px;top:573.28px;font-size:9.00px;color:#474747;transform:scaleX(0.7910);">624.999 ms</span><span class="t" style="left:695.70px;top:582.88px;font-size:9.00px;color:#474747;transform:scaleX(0.7536);">SR: 1 MS/s</span><span class="t" style="left:751.00px;top:582.88px;font-size:9.00px;color:#474747;transform:scaleX(0.8087);">1 µs/pt</span><span class="t" style="left:695.70px;top:592.68px;font-size:9.00px;color:#474747;transform:scaleX(0.8040);">RL: 624.999 k…</span><svg style="left:750.5px;top:593.1px" width="7" height="8" viewBox="0 0 7 8"><path d="M0.5 0.5 H6.3 V5 L3.4 7.6 L0.5 5 Z" fill="#e07a10"/></svg><span class="t" style="left:752.37px;top:594.87px;font-size:5.00px;color:#2a1a04;font-weight:bold;">T</span><span class="t" style="left:760.00px;top:592.68px;font-size:9.00px;color:#474747;transform:scaleX(0.7438);">50%</span><div class="abs" style="left:800.1px;top:562.4px;width:81.9px;height:39.4px;background:#d4d4d4;border-radius:2.5px;overflow:hidden;box-shadow:0 0 0 1px #1b1b1b;"><div class="abs" style="left:0;top:0;width:81.9px;height:9.5px;background:#626262;"></div></div><span class="t" style="left:802.50px;top:562.75px;font-size:8.80px;color:#f4f4f4;transform:scaleX(0.8858);">Trigger</span><div class="abs" style="left:802.5px;top:573.3px;width:15.2px;height:7.9px;background:#eee81e;border-radius:2.5px;box-shadow:0 0 0 0.7px #4e4e18;"></div><span class="t" style="left:808.39px;top:574.40px;font-size:6.50px;color:#6a6a10;">1</span><svg style="left:822.5px;top:572.5px" width="9" height="9" viewBox="0 0 9 9"><path d="M0.6 7.6 H2.6 L6 1.4 H8.2" fill="none" stroke="#555" stroke-width="0.85"/></svg><span class="t" style="left:836.60px;top:573.18px;font-size:9.00px;color:#474747;transform:scaleX(0.8281);">11.2 V</span><div class="abs" style="left:886.2px;top:562.4px;width:50.8px;height:39.4px;background:#d4d4d4;border-radius:2.5px;overflow:hidden;box-shadow:0 0 0 1px #1b1b1b;"><div class="abs" style="left:0;top:0;width:50.8px;height:9.5px;background:#626262;"></div></div><span class="t" style="left:888.60px;top:562.75px;font-size:8.80px;color:#f4f4f4;transform:scaleX(0.9472);">Acquisition</span><span class="t" style="left:888.70px;top:573.18px;font-size:9.00px;color:#474747;transform:scaleX(0.7391);">Single</span><div class="abs" style="left:949px;top:562.3px;width:46.8px;height:18px;background:#dadada;border-radius:3px;"></div><span class="t" style="left:961.10px;top:566.72px;font-size:8.60px;color:#141414;font-weight:bold;transform:scaleX(0.8156);">Offline</span><div class="abs" style="left:949.7px;top:583.3px;width:45.6px;height:18.4px;background:#d2d2d2;border-radius:2px;"></div><span class="t" style="left:952.70px;top:583.75px;font-size:8.80px;color:#474747;transform:scaleX(0.8135);">18 Sep 2023</span><span class="t" style="left:953.80px;top:592.55px;font-size:8.80px;color:#474747;transform:scaleX(0.8400);">3:06:19 PM</span>
</body>
</html>
